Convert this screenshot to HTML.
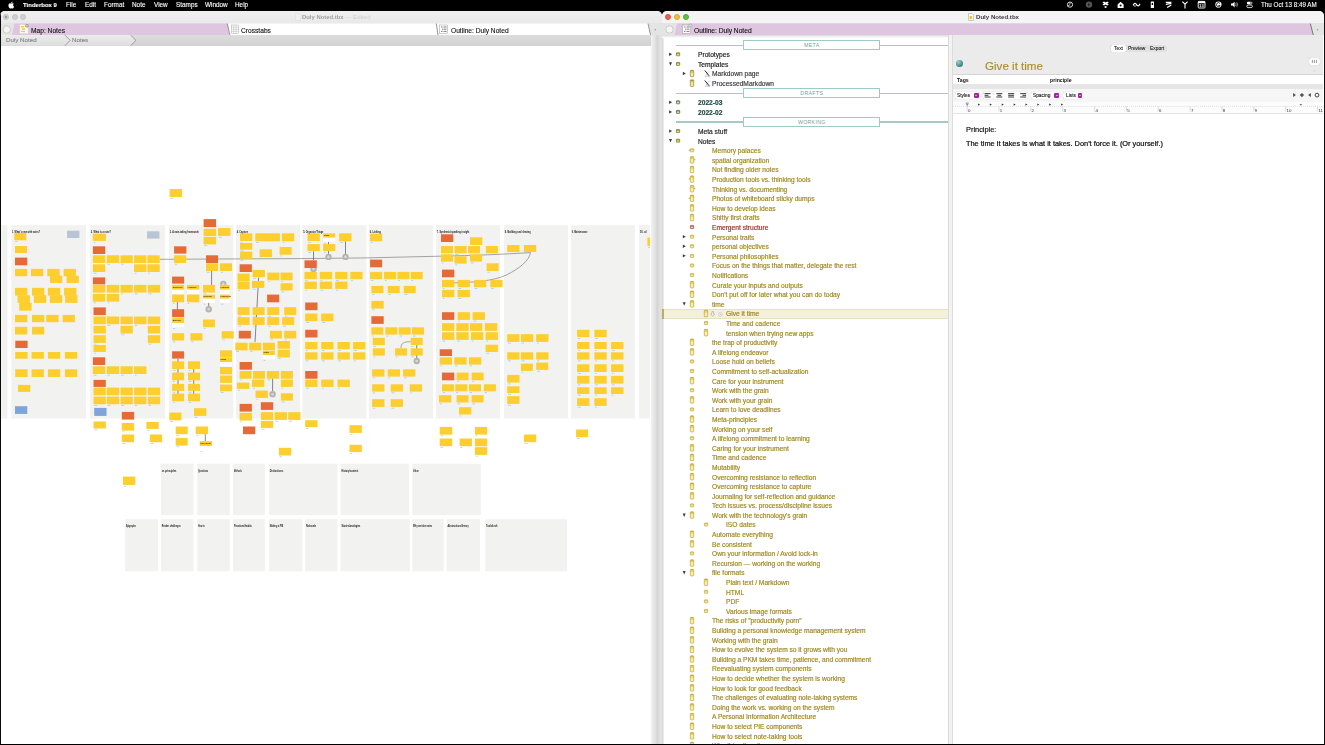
<!DOCTYPE html><html><head><meta charset="utf-8"><title>Tinderbox</title><style>

html,body{margin:0;padding:0;background:#000;}
body{width:1325px;height:745px;position:relative;overflow:hidden;font-family:"Liberation Sans",sans-serif;color:#222;}
.abs{position:absolute;}
.t{position:absolute;white-space:nowrap;line-height:1;will-change:transform;}
#menubar{left:0;top:0;width:1325px;height:10.5px;background:#000;color:#fff;}
#menubar .t{font-size:6.4px;color:#fff;top:1.6px;-webkit-text-stroke:.1px #fff;}
#lw{left:0;top:10.5px;width:662px;height:733px;background:#fff;border-radius:5px 5px 0 0;overflow:hidden;}
#rw{left:662px;top:10.5px;width:661.5px;height:733px;background:#fff;border-radius:5px 5px 0 0;overflow:hidden;}
.tl{position:absolute;width:5.8px;height:5.8px;border-radius:50%;top:3.9px;}
.orow{position:absolute;left:0;width:286px;height:9.6px;}
.orow .t{font-size:6.65px;top:2.3px;-webkit-text-stroke:.18px currentColor;}
.sep{position:absolute;height:1.2px;background:#a3cbc4;}
.sepbox{position:absolute;border:1px solid #a0c9c2;background:#fff;box-sizing:border-box;text-align:center;font-size:5.2px;color:#6fa39b;line-height:9.2px;letter-spacing:.35px;}
.tri{position:absolute;width:0;height:0;}
.tri.r{border-left:3.2px solid #444;border-top:1.8px solid transparent;border-bottom:1.8px solid transparent;}
.tri.d{border-top:3.7px solid #444;border-left:1.6px solid transparent;border-right:1.6px solid transparent;}
.btn{position:absolute;box-sizing:border-box;background:#fff;box-shadow:0 0 .7px rgba(0,0,0,.35);border-radius:2px;}
.pp{position:absolute;width:4.8px;height:4.8px;background:#a3279f;border-radius:1px;}

</style></head><body>
<div id="menubar" class="abs">
<svg class="abs" style="left:8px;top:1.2px" width="7" height="8" viewBox="0 0 14 16"><path fill="#fff" d="M10.2 8.5c0-1.7 1.4-2.5 1.5-2.6-.8-1.2-2.1-1.3-2.5-1.4-1.1-.1-2.1.6-2.6.6-.5 0-1.4-.6-2.3-.6C3.1 4.6 2 5.3 1.4 6.3c-1.2 2.1-.3 5.3.9 7 .6.8 1.3 1.8 2.2 1.7.9 0 1.2-.6 2.3-.6s1.4.6 2.3.6c1 0 1.6-.9 2.1-1.7.7-1 .9-1.9 1-2-.1 0-2-.8-2-2.8zM8.5 3.3c.5-.6.8-1.4.7-2.2-.7 0-1.5.5-2 1.1-.4.5-.8 1.3-.7 2.1.8.1 1.5-.4 2-1z"/></svg>
<span class="t" style="left:23.3px;font-weight:bold;font-size:6px;top:1.8px;">Tinderbox 9</span>
<span class="t" style="left:66.3px;">File</span>
<span class="t" style="left:84.8px;">Edit</span>
<span class="t" style="left:104px;">Format</span>
<span class="t" style="left:132px;">Note</span>
<span class="t" style="left:154px;">View</span>
<span class="t" style="left:175.8px;">Stamps</span>
<span class="t" style="left:205px;">Window</span>
<span class="t" style="left:235.3px;">Help</span>
<span class="t" style="left:1260.6px;font-size:6.27px;top:1.8px">Thu Oct 13 8:49 AM</span>
<svg class="abs" style="will-change:transform;left:1060px;top:0" width="200" height="10.5" viewBox="1060 0 200 10.5">
<circle cx="1070" cy="4.6" r="2.6" fill="none" stroke="#ddd" stroke-width="1"/><path d="M1067.5 6.5l2.5-2 0-2" stroke="#ddd" stroke-width=".8" fill="none"/>
<circle cx="1089" cy="4.6" r="3.2" fill="#555"/><path d="M1088 3l2.2 1.6-2.2 1.6z" fill="#222"/>
<path d="M1102.3999999999999 2.6l1.6-1 1.6 1 1.6-1 1.6 1-1.6 1 1.6 1-1.6 1-1.6-1-1.6 1-1.6-1 1.6-1z M1104.0 7l1.6-1 1.6 1-1.6 1z" fill="#fff"/>
<path d="M1117.6 4.6l3-2.8 3 2.8v3.4h-6z" fill="#fff"/><circle cx="1120.6" cy="5.4" r="1" fill="#000"/>
<path d="M1133.1999999999998 5.4c1-2.6 2.4-2.6 3.4-.8s2.4 1.8 3.4-.8" stroke="#fff" stroke-width="1.1" fill="none"/><path d="M1133.1999999999998 4.2c1 2.6 2.4 2.6 3.4.8" stroke="#fff" stroke-width=".8" fill="none"/>
<rect x="1150.8000000000002" y="1.6" width="3.2" height="6.4" rx=".6" fill="#fff"/><rect x="1151.7" y="3" width="1.4" height="2" fill="#000"/>
<path d="M1165.8 2.4h5.6M1165.8 4.4l5.6-1M1167.1 7.4l4.3-2.5" stroke="#fff" stroke-width="1.1" fill="none"/>
<path d="M1185 8.4v-4.4M1182.4 1.6l2.6 2.6 2.6-2.6" stroke="#fff" stroke-width="1.1" fill="none"/>
<rect x="1198.1999999999998" y="1.4" width="6.8" height="6.6" rx=".8" fill="none" stroke="#fff" stroke-width=".9"/><rect x="1198.1999999999998" y="1.4" width="6.8" height="1.8" fill="#fff"/>
<text x="1201.6" y="7.3" font-size="4" font-weight="bold" fill="#fff" text-anchor="middle" font-family='"Liberation Sans", sans-serif'>13</text>
<circle cx="1218.4" cy="4.6" r="3.1" fill="#fff"/><path d="M1220.0 3.4a2 2 0 1 0 .2 2.2h-1.8" stroke="#000" stroke-width=".8" fill="none"/>
<path d="M1231.0 3.6h1.6l2-1.8v5.6l-2-1.8h-1.6z" fill="#fff"/><path d="M1235.6000000000001 3.2q1 1.4 0 2.8M1236.8000000000002 2.4q1.6 2.2 0 4.4" stroke="#ccc" stroke-width=".7" fill="none"/>
<rect x="1246.8" y="1.8" width="5.6" height="2.4" rx="1.2" fill="#fff"/><rect x="1246.8" y="5" width="5.6" height="2.6" rx="1.3" fill="none" stroke="#fff" stroke-width=".8"/><circle cx="1251.0" cy="3" r=".8" fill="#000"/>
</svg>
</div>
<div id="lw" class="abs">
<div class="abs" style="left:0;top:0;width:662px;height:12.7px;background:linear-gradient(#efefef,#e9e9e9)"></div>
<div class="tl" style="left:3.3000000000000003px;background:#d0d0d0;border:0.4px solid #c2c2c2;box-sizing:border-box"></div>
<div class="tl" style="left:11.9px;background:#d0d0d0;border:0.4px solid #c2c2c2;box-sizing:border-box"></div>
<div class="tl" style="left:20.400000000000002px;background:#d0d0d0;border:0.4px solid #c2c2c2;box-sizing:border-box"></div>
<div class="abs" style="left:5.2px;top:5.8px;width:2px;height:2px;border-radius:50%;background:#888"></div>
<svg class="abs" style="left:295px;top:2.6px" width="6" height="8" viewBox="0 0 6 8"><path d="M.5.5h3.5l1.5 1.5v5.5h-5z" fill="#f1f1f1" stroke="#dcdcdc" stroke-width=".5"/></svg>
<span class="t" style="left:301.9px;top:3.9px;font-size:5.9px;font-weight:bold;color:#a0a0a0">Duly Noted.tbx <span style="color:#cfcfcf;font-weight:normal;font-size:6.2px">— Edited</span></span>
<div class="abs" style="left:0;top:12.7px;width:662px;height:12px;background:#e4e4e4"></div>
<svg class="abs" style="left:0;top:12.7px" width="662" height="12" viewBox="0 0 662 12">
<path d="M12 12L14.5 0.6H227.5L230 12z" fill="#dfc6e0"/>
<path d="M229.3 12L227.6 0.6H436.5L438 12z" fill="#fff"/>
<path d="M438 12L436.5 0.6H648L650.5 12z" fill="#fff"/>
<path d="M227.3 0.6L229.8 12M436.3 0.6L438 12M648 .6L650.5 12" stroke="#8a8a8a" stroke-width=".9" fill="none"/>
<circle cx="6.8" cy="6.5" r="3.7" fill="#f4f4f4" stroke="#b5b5b5" stroke-width=".6"/>
<rect x="19.8" y="1.6" width="8.2" height="9" fill="#fff" stroke="#ccc" stroke-width=".4"/><rect x="20.8" y="3" width="3.6" height="1.5" fill="#f6c92e"/><rect x="21.6" y="5.4" width="3.6" height="1.4" fill="#f6c92e"/><rect x="20.8" y="7.8" width="4.2" height="1.4" fill="#f6c92e"/><circle cx="26.9" cy="2.8" r="1.5" fill="#c8c8c8" stroke="#777" stroke-width=".5"/>
<rect x="231.5" y="2" width="7" height="8.5" fill="#fff" stroke="#aaa" stroke-width=".5"/><path d="M233.8 2v8.5M236.1 2v8.5M231.5 4.2h7M231.5 6.3h7M231.5 8.4h7" stroke="#aaa" stroke-width=".4"/>
<rect x="439.6" y="2" width="8" height="8.5" fill="#fff" stroke="#999" stroke-width=".5"/><path d="M441 4h1.5M443.5 4h3M442 6.2h1.5M444 6.2h2.5M441 8.4h1.5M443.5 8.4h3" stroke="#444" stroke-width=".7"/>
<circle cx="655.4" cy="6.8" r=".8" fill="#999"/>
</svg>
<span class="t" style="left:31px;top:17px;font-size:6.65px;color:#111;-webkit-text-stroke:.12px #111">Map: Notes</span>
<span class="t" style="left:241px;top:17px;font-size:6.65px;color:#111;-webkit-text-stroke:.12px #111">Crosstabs</span>
<span class="t" style="left:451px;top:17px;font-size:6.65px;color:#111;-webkit-text-stroke:.12px #111">Outline: Duly Noted</span>
<div class="abs" style="left:0;top:24.7px;width:650.5px;height:10.8px;background:linear-gradient(#dcdcdc,#d2d2d2)"></div>
<svg class="abs" style="left:0;top:24.7px" width="140" height="10.8" viewBox="0 0 140 10.8"><defs><linearGradient id="bg" x1="0" y1="0" x2="0" y2="1"><stop offset="0" stop-color="#ececec"/><stop offset="1" stop-color="#dedede"/></linearGradient></defs><path d="M0 0H130.5L136 5.4L130.5 10.8H0z" fill="url(#bg)"/><path d="M64.8 0L70.2 5.4L64.8 10.8M130.5 0L136 5.4L130.5 10.8" stroke="#8c8c8c" stroke-width=".8" fill="none"/></svg>
<span class="t" style="left:6px;top:26.7px;font-size:6.2px;color:#888;-webkit-text-stroke:.15px #888">Duly Noted</span>
<span class="t" style="left:72px;top:26.7px;font-size:6.2px;color:#888;-webkit-text-stroke:.15px #888">Notes</span>
<div class="abs" style="left:650.5px;top:24.7px;width:11.5px;height:709px;background:linear-gradient(90deg,#f2f2f2 0,#e6e6e6 3px,#dedede 5px,#d2d2d2 6.2px,#dcdcdc 7.5px,#e4e4e4 10px,#dadada 11.5px)"></div>
<div class="abs" style="left:0;top:0;width:1.1px;height:735px;background:#0a0a0a"></div>
<svg class="abs" style="will-change:transform;left:0;top:35.5px" width="650.5" height="698" viewBox="0 46 650.5 698">
<rect x="1.1" y="225.2" width="6.4" height="193.3" fill="#f2f2f1"/>
<rect x="11.3" y="225.2" width="74.7" height="193.3" fill="#f2f2f1"/>
<rect x="90.0" y="225.2" width="75.0" height="193.3" fill="#f2f2f1"/>
<rect x="169.0" y="225.2" width="64.3" height="193.3" fill="#f2f2f1"/>
<rect x="236.0" y="225.2" width="64.0" height="193.3" fill="#f2f2f1"/>
<rect x="302.4" y="225.2" width="64.0" height="193.3" fill="#f2f2f1"/>
<rect x="369.0" y="225.2" width="64.0" height="193.3" fill="#f2f2f1"/>
<rect x="436.0" y="225.2" width="64.0" height="193.3" fill="#f2f2f1"/>
<rect x="504.0" y="225.2" width="64.0" height="193.3" fill="#f2f2f1"/>
<rect x="571.0" y="225.2" width="64.0" height="193.3" fill="#f2f2f1"/>
<rect x="639.0" y="225.2" width="11.0" height="193.3" fill="#f2f2f1"/>
<rect x="161.0" y="463.7" width="32.5" height="51.4" fill="#f2f2f1"/>
<rect x="197.2" y="463.7" width="32.6" height="51.4" fill="#f2f2f1"/>
<rect x="233.1" y="463.7" width="31.8" height="51.4" fill="#f2f2f1"/>
<rect x="269.0" y="463.7" width="68.4" height="51.4" fill="#f2f2f1"/>
<rect x="340.6" y="463.7" width="68.5" height="51.4" fill="#f2f2f1"/>
<rect x="412.3" y="463.7" width="68.5" height="51.4" fill="#f2f2f1"/>
<rect x="125.1" y="519.2" width="33.0" height="52.1" fill="#f2f2f1"/>
<rect x="161.0" y="519.2" width="32.5" height="52.1" fill="#f2f2f1"/>
<rect x="197.2" y="519.2" width="32.6" height="52.1" fill="#f2f2f1"/>
<rect x="233.1" y="519.2" width="31.8" height="52.1" fill="#f2f2f1"/>
<rect x="269.0" y="519.2" width="33.4" height="52.1" fill="#f2f2f1"/>
<rect x="305.2" y="519.2" width="32.2" height="52.1" fill="#f2f2f1"/>
<rect x="340.6" y="519.2" width="69.3" height="52.1" fill="#f2f2f1"/>
<rect x="412.3" y="519.2" width="31.4" height="52.1" fill="#f2f2f1"/>
<rect x="446.6" y="519.2" width="33.4" height="52.1" fill="#f2f2f1"/>
<rect x="485.3" y="519.2" width="81.9" height="52.1" fill="#f2f2f1"/>
<path d="M159.7 259.3L300 258.6L366 257.9L440 256.2Q490 255.2 530.5 252.6" stroke="#8e8e8e" stroke-width=".8" fill="none"/>
<path d="M530.5 252.6C529.5 260 520 268.3 506.6 274.9S470 282.4 454 282.9" stroke="#8e8e8e" stroke-width=".8" fill="none"/>
<path d="M211.6 270.9V285M177.4 302V310M258.6 277.6L255 342M313.5 251.3V260M328.5 241.3V254M345.5 241.3V254M178 359V394M193.7 365V394M205.3 434.2V441.2M208.7 297.5V306M272.6 378.6V391M416.7 345V358" stroke="#555" stroke-width=".7" fill="none"/>
<path d="M401 348C401 343 404 341.7 410.7 341.7" stroke="#8e8e8e" stroke-width=".8" fill="none"/>
<circle cx="208.7" cy="309.2" r="3.2" fill="#b3b3b3"/><circle cx="208.7" cy="309.2" r="1.3" fill="#d8d8d8"/>
<circle cx="223.3" cy="283.9" r="3.2" fill="#b3b3b3"/><circle cx="223.3" cy="283.9" r="1.3" fill="#d8d8d8"/>
<circle cx="313.5" cy="269.1" r="3.2" fill="#b3b3b3"/><circle cx="313.5" cy="269.1" r="1.3" fill="#d8d8d8"/>
<circle cx="328.5" cy="256.9" r="3.2" fill="#b3b3b3"/><circle cx="328.5" cy="256.9" r="1.3" fill="#d8d8d8"/>
<circle cx="345.5" cy="256.9" r="3.2" fill="#b3b3b3"/><circle cx="345.5" cy="256.9" r="1.3" fill="#d8d8d8"/>
<circle cx="272.6" cy="394.2" r="3.2" fill="#b3b3b3"/><circle cx="272.6" cy="394.2" r="1.3" fill="#d8d8d8"/>
<circle cx="416.7" cy="361" r="3.2" fill="#b3b3b3"/><circle cx="416.7" cy="361" r="1.3" fill="#d8d8d8"/>
<rect x="14.3" y="233.0" width="12.0" height="7.3" fill="#fcce2e"/>
<rect x="15.0" y="246.0" width="12.0" height="7.0" fill="#fcce2e"/>
<rect x="15.0" y="257.6" width="12.3" height="7.7" fill="#e66a38"/>
<rect x="15.0" y="268.9" width="12.3" height="7.3" fill="#fcce2e"/>
<rect x="31.0" y="268.9" width="12.3" height="7.3" fill="#fcce2e"/>
<rect x="47.3" y="268.9" width="12.3" height="7.3" fill="#fcce2e"/>
<rect x="63.6" y="268.9" width="12.3" height="7.3" fill="#fcce2e"/>
<rect x="49.9" y="275.7" width="12.3" height="7.3" fill="#fcce2e"/>
<rect x="66.6" y="275.7" width="12.3" height="7.3" fill="#fcce2e"/>
<rect x="15.0" y="287.9" width="12.3" height="7.7" fill="#fcce2e"/>
<rect x="32.0" y="287.9" width="12.3" height="7.7" fill="#fcce2e"/>
<rect x="47.9" y="287.9" width="12.3" height="7.7" fill="#fcce2e"/>
<rect x="64.1" y="287.9" width="12.3" height="7.7" fill="#fcce2e"/>
<rect x="17.6" y="295.2" width="12.3" height="7.7" fill="#fcce2e"/>
<rect x="33.9" y="295.2" width="12.3" height="7.7" fill="#fcce2e"/>
<rect x="49.9" y="295.2" width="12.3" height="7.7" fill="#fcce2e"/>
<rect x="65.2" y="295.2" width="12.3" height="7.7" fill="#fcce2e"/>
<rect x="19.3" y="302.9" width="12.3" height="7.7" fill="#fcce2e"/>
<rect x="15.0" y="314.9" width="12.3" height="7.3" fill="#fcce2e"/>
<rect x="32.0" y="314.9" width="12.3" height="7.3" fill="#fcce2e"/>
<rect x="46.3" y="314.9" width="12.3" height="7.3" fill="#fcce2e"/>
<rect x="62.6" y="314.9" width="12.3" height="7.3" fill="#fcce2e"/>
<rect x="15.0" y="326.8" width="12.3" height="7.7" fill="#fcce2e"/>
<rect x="32.0" y="326.8" width="12.3" height="7.7" fill="#fcce2e"/>
<rect x="67.1" y="230.7" width="12.3" height="7.3" fill="#b9c5d5"/>
<rect x="92.9" y="233.6" width="13.0" height="7.3" fill="#fcce2e"/>
<rect x="92.9" y="246.3" width="12.3" height="7.7" fill="#e66a38"/>
<rect x="92.9" y="255.3" width="12.3" height="7.7" fill="#fcce2e"/>
<rect x="106.8" y="255.3" width="12.3" height="7.7" fill="#fcce2e"/>
<rect x="120.5" y="255.3" width="12.3" height="7.7" fill="#fcce2e"/>
<rect x="134.1" y="255.3" width="12.3" height="7.7" fill="#fcce2e"/>
<rect x="147.4" y="255.3" width="12.3" height="7.7" fill="#fcce2e"/>
<rect x="92.9" y="264.3" width="12.3" height="7.7" fill="#fcce2e"/>
<rect x="134.1" y="264.3" width="12.3" height="7.7" fill="#fcce2e"/>
<rect x="147.4" y="264.3" width="12.3" height="7.7" fill="#fcce2e"/>
<rect x="92.9" y="277.4" width="12.3" height="7.0" fill="#e66a38"/>
<rect x="92.9" y="284.9" width="12.3" height="7.7" fill="#fcce2e"/>
<rect x="106.8" y="284.9" width="12.3" height="7.7" fill="#fcce2e"/>
<rect x="120.5" y="284.9" width="12.3" height="7.7" fill="#fcce2e"/>
<rect x="134.1" y="284.9" width="12.3" height="7.7" fill="#fcce2e"/>
<rect x="147.8" y="284.9" width="12.3" height="7.7" fill="#fcce2e"/>
<rect x="92.9" y="293.9" width="12.3" height="7.7" fill="#fcce2e"/>
<rect x="106.8" y="293.9" width="12.3" height="7.7" fill="#fcce2e"/>
<rect x="93.5" y="307.4" width="12.3" height="7.7" fill="#e66a38"/>
<rect x="93.5" y="316.5" width="12.3" height="7.7" fill="#fcce2e"/>
<rect x="106.8" y="316.5" width="12.3" height="7.7" fill="#fcce2e"/>
<rect x="120.5" y="316.5" width="12.3" height="7.7" fill="#fcce2e"/>
<rect x="134.1" y="316.5" width="12.3" height="7.7" fill="#fcce2e"/>
<rect x="147.8" y="316.5" width="12.3" height="7.7" fill="#fcce2e"/>
<rect x="93.5" y="325.8" width="12.3" height="7.7" fill="#fcce2e"/>
<rect x="120.5" y="325.8" width="12.3" height="7.7" fill="#fcce2e"/>
<rect x="147.8" y="325.8" width="12.3" height="7.7" fill="#fcce2e"/>
<rect x="93.5" y="335.2" width="12.3" height="7.7" fill="#fcce2e"/>
<rect x="147.8" y="335.2" width="12.3" height="7.7" fill="#fcce2e"/>
<rect x="147.1" y="231.3" width="12.3" height="7.3" fill="#b9c5d5"/>
<rect x="174.1" y="246.3" width="12.3" height="7.3" fill="#e66a38"/>
<rect x="174.1" y="255.3" width="12.0" height="7.7" fill="#fcce2e"/>
<rect x="206.0" y="255.3" width="12.0" height="7.7" fill="#e66a38"/>
<rect x="206.0" y="263.3" width="12.0" height="7.7" fill="#fcce2e"/>
<rect x="172.1" y="276.6" width="12.0" height="7.0" fill="#e66a38"/>
<rect x="172.1" y="284.9" width="12.0" height="9.0" fill="#fff"/>
<rect x="172.1" y="284.9" width="12.0" height="4.7" fill="#fcce2e"/>
<rect x="187.0" y="284.9" width="12.3" height="9.0" fill="#fff"/>
<rect x="187.0" y="284.9" width="12.3" height="4.7" fill="#fcce2e"/>
<rect x="203.0" y="284.9" width="12.0" height="7.7" fill="#fcce2e"/>
<rect x="172.1" y="294.6" width="12.0" height="7.7" fill="#fcce2e"/>
<rect x="187.0" y="294.6" width="12.3" height="7.7" fill="#fcce2e"/>
<rect x="203.0" y="294.6" width="12.0" height="8.3" fill="#fff"/>
<rect x="203.0" y="294.6" width="12.0" height="4.0" fill="#fcce2e"/>
<rect x="172.1" y="309.2" width="12.0" height="8.0" fill="#e66a38"/>
<rect x="172.1" y="317.9" width="12.0" height="9.3" fill="#fff"/>
<rect x="172.1" y="317.9" width="12.0" height="5.0" fill="#fcce2e"/>
<rect x="203.0" y="319.5" width="12.0" height="7.7" fill="#fcce2e"/>
<rect x="172.1" y="333.2" width="12.0" height="7.3" fill="#fcce2e"/>
<rect x="190.4" y="333.2" width="12.0" height="7.3" fill="#fcce2e"/>
<rect x="169.6" y="189.0" width="12.5" height="8.0" fill="#fcce2e"/>
<rect x="203.6" y="219.1" width="12.5" height="8.0" fill="#e66a38"/>
<rect x="203.6" y="228.8" width="12.5" height="7.2" fill="#fcce2e"/>
<rect x="218.1" y="228.1" width="12.3" height="7.8" fill="#fcce2e"/>
<rect x="203.6" y="236.9" width="12.5" height="7.5" fill="#fcce2e"/>
<rect x="220.0" y="263.3" width="12.0" height="7.7" fill="#fcce2e"/>
<rect x="220.0" y="284.9" width="9.7" height="9.0" fill="#fff"/>
<rect x="220.0" y="284.9" width="9.7" height="4.7" fill="#fcce2e"/>
<rect x="220.0" y="294.6" width="9.7" height="8.3" fill="#fff"/>
<rect x="220.0" y="294.6" width="9.7" height="4.0" fill="#fcce2e"/>
<rect x="221.7" y="331.2" width="12.0" height="7.3" fill="#fcce2e"/>
<rect x="240.0" y="233.3" width="12.3" height="7.7" fill="#fcce2e"/>
<rect x="255.3" y="233.3" width="24.6" height="8.0" fill="#fcce2e"/>
<rect x="281.9" y="233.3" width="12.3" height="8.0" fill="#fcce2e"/>
<rect x="240.0" y="243.0" width="12.3" height="6.7" fill="#fcce2e"/>
<rect x="279.6" y="247.0" width="12.0" height="7.7" fill="#fcce2e"/>
<rect x="240.0" y="251.6" width="12.3" height="7.3" fill="#fcce2e"/>
<rect x="259.6" y="249.3" width="12.3" height="7.7" fill="#fcce2e"/>
<rect x="239.6" y="264.3" width="12.3" height="7.7" fill="#e66a38"/>
<rect x="252.6" y="269.9" width="12.3" height="7.3" fill="#fcce2e"/>
<rect x="267.3" y="272.6" width="12.0" height="7.7" fill="#fcce2e"/>
<rect x="280.6" y="272.6" width="12.0" height="7.7" fill="#fcce2e"/>
<rect x="237.6" y="273.6" width="12.0" height="7.7" fill="#fcce2e"/>
<rect x="237.6" y="281.6" width="12.0" height="7.7" fill="#fcce2e"/>
<rect x="252.0" y="280.9" width="12.3" height="7.0" fill="#fcce2e"/>
<rect x="280.6" y="283.2" width="12.0" height="7.3" fill="#fcce2e"/>
<rect x="267.1" y="294.6" width="12.1" height="7.7" fill="#e66a38"/>
<rect x="237.6" y="307.2" width="12.0" height="7.7" fill="#fcce2e"/>
<rect x="252.6" y="307.2" width="12.0" height="7.7" fill="#fcce2e"/>
<rect x="267.3" y="307.2" width="12.0" height="7.7" fill="#fcce2e"/>
<rect x="284.2" y="307.2" width="12.0" height="7.7" fill="#fcce2e"/>
<rect x="237.6" y="317.2" width="12.0" height="7.7" fill="#fcce2e"/>
<rect x="252.6" y="317.2" width="12.0" height="7.7" fill="#fcce2e"/>
<rect x="267.3" y="317.2" width="12.0" height="7.7" fill="#fcce2e"/>
<rect x="282.2" y="317.2" width="12.0" height="7.7" fill="#fcce2e"/>
<rect x="238.8" y="330.8" width="12.1" height="7.7" fill="#e66a38"/>
<rect x="269.9" y="330.8" width="12.0" height="7.7" fill="#fcce2e"/>
<rect x="284.2" y="330.8" width="12.0" height="7.7" fill="#fcce2e"/>
<rect x="307.5" y="233.3" width="12.3" height="7.7" fill="#fcce2e"/>
<rect x="323.2" y="233.3" width="12.0" height="8.6" fill="#fff"/>
<rect x="323.2" y="233.3" width="12.0" height="4.3" fill="#fcce2e"/>
<rect x="339.2" y="233.3" width="12.3" height="8.0" fill="#fcce2e"/>
<rect x="307.5" y="244.1" width="12.3" height="7.0" fill="#fcce2e"/>
<rect x="323.2" y="244.1" width="12.0" height="7.0" fill="#fcce2e"/>
<rect x="304.5" y="260.3" width="12.3" height="7.7" fill="#e66a38"/>
<rect x="304.5" y="271.9" width="12.3" height="7.3" fill="#fcce2e"/>
<rect x="319.8" y="271.9" width="12.3" height="7.3" fill="#fcce2e"/>
<rect x="335.2" y="271.9" width="12.3" height="7.3" fill="#fcce2e"/>
<rect x="350.3" y="271.9" width="12.3" height="7.3" fill="#fcce2e"/>
<rect x="304.5" y="281.6" width="12.3" height="7.3" fill="#fcce2e"/>
<rect x="319.8" y="281.6" width="12.3" height="7.3" fill="#fcce2e"/>
<rect x="335.2" y="281.6" width="12.3" height="7.3" fill="#fcce2e"/>
<rect x="305.2" y="302.5" width="12.3" height="7.7" fill="#e66a38"/>
<rect x="305.2" y="313.5" width="12.3" height="7.7" fill="#fcce2e"/>
<rect x="321.2" y="313.5" width="12.3" height="7.7" fill="#fcce2e"/>
<rect x="305.2" y="329.8" width="12.3" height="7.7" fill="#e66a38"/>
<rect x="370.1" y="233.6" width="12.0" height="7.7" fill="#fcce2e"/>
<rect x="370.1" y="259.6" width="12.0" height="7.7" fill="#e66a38"/>
<rect x="370.1" y="271.9" width="12.0" height="7.3" fill="#fcce2e"/>
<rect x="384.1" y="271.9" width="12.0" height="7.3" fill="#fcce2e"/>
<rect x="397.4" y="271.9" width="12.0" height="7.3" fill="#fcce2e"/>
<rect x="410.7" y="271.9" width="12.0" height="7.3" fill="#fcce2e"/>
<rect x="371.4" y="285.9" width="12.0" height="7.3" fill="#fcce2e"/>
<rect x="387.7" y="285.9" width="12.0" height="7.3" fill="#fcce2e"/>
<rect x="403.7" y="285.9" width="12.0" height="7.3" fill="#fcce2e"/>
<rect x="371.4" y="300.9" width="12.3" height="7.7" fill="#fcce2e"/>
<rect x="371.4" y="316.2" width="12.3" height="7.7" fill="#e66a38"/>
<rect x="371.4" y="327.3" width="12.0" height="7.3" fill="#fcce2e"/>
<rect x="385.4" y="327.3" width="12.0" height="7.3" fill="#fcce2e"/>
<rect x="398.7" y="327.3" width="12.0" height="7.3" fill="#fcce2e"/>
<rect x="412.0" y="327.3" width="12.0" height="7.3" fill="#fcce2e"/>
<rect x="372.8" y="337.8" width="12.0" height="7.3" fill="#fcce2e"/>
<rect x="410.7" y="337.8" width="12.0" height="7.3" fill="#fcce2e"/>
<rect x="441.0" y="234.3" width="12.3" height="7.7" fill="#e66a38"/>
<rect x="470.0" y="237.3" width="12.3" height="7.7" fill="#fcce2e"/>
<rect x="441.0" y="246.0" width="12.0" height="7.3" fill="#fcce2e"/>
<rect x="454.6" y="246.0" width="12.0" height="7.3" fill="#fcce2e"/>
<rect x="468.0" y="246.0" width="12.0" height="7.3" fill="#fcce2e"/>
<rect x="485.9" y="246.0" width="12.0" height="7.3" fill="#fcce2e"/>
<rect x="441.0" y="254.3" width="12.0" height="7.3" fill="#fcce2e"/>
<rect x="454.6" y="256.3" width="12.0" height="7.3" fill="#fcce2e"/>
<rect x="470.0" y="254.3" width="12.0" height="7.3" fill="#fcce2e"/>
<rect x="486.6" y="263.3" width="12.0" height="7.7" fill="#fcce2e"/>
<rect x="442.0" y="269.6" width="12.3" height="7.7" fill="#e66a38"/>
<rect x="442.0" y="279.9" width="12.3" height="7.3" fill="#fcce2e"/>
<rect x="457.6" y="279.9" width="12.3" height="7.3" fill="#fcce2e"/>
<rect x="473.9" y="279.9" width="12.3" height="7.3" fill="#fcce2e"/>
<rect x="490.3" y="279.9" width="12.3" height="7.3" fill="#fcce2e"/>
<rect x="442.0" y="289.9" width="12.3" height="7.3" fill="#fcce2e"/>
<rect x="457.6" y="289.9" width="12.3" height="7.3" fill="#fcce2e"/>
<rect x="442.0" y="312.2" width="12.3" height="7.7" fill="#e66a38"/>
<rect x="457.6" y="312.2" width="12.3" height="7.7" fill="#fcce2e"/>
<rect x="472.6" y="312.2" width="12.3" height="7.7" fill="#fcce2e"/>
<rect x="442.0" y="323.2" width="12.3" height="7.7" fill="#fcce2e"/>
<rect x="456.3" y="323.2" width="12.3" height="7.7" fill="#fcce2e"/>
<rect x="470.0" y="323.2" width="12.3" height="7.7" fill="#fcce2e"/>
<rect x="484.9" y="323.2" width="12.3" height="7.7" fill="#fcce2e"/>
<rect x="442.0" y="332.2" width="12.3" height="7.7" fill="#fcce2e"/>
<rect x="456.3" y="332.2" width="12.3" height="7.7" fill="#fcce2e"/>
<rect x="471.0" y="332.2" width="12.3" height="7.7" fill="#fcce2e"/>
<rect x="485.6" y="332.2" width="12.3" height="7.7" fill="#fcce2e"/>
<rect x="507.2" y="245.0" width="12.3" height="7.0" fill="#fcce2e"/>
<rect x="523.9" y="245.0" width="12.3" height="7.0" fill="#fcce2e"/>
<rect x="507.2" y="334.2" width="12.3" height="7.7" fill="#fcce2e"/>
<rect x="520.9" y="334.2" width="12.3" height="7.7" fill="#fcce2e"/>
<rect x="536.2" y="334.2" width="12.3" height="7.7" fill="#fcce2e"/>
<rect x="577.1" y="329.8" width="12.3" height="7.3" fill="#fcce2e"/>
<rect x="594.4" y="329.8" width="12.3" height="7.3" fill="#fcce2e"/>
<rect x="647.4" y="237.6" width="2.7" height="8.3" fill="#fcce2e"/>
<rect x="15.3" y="340.7" width="12.3" height="7.3" fill="#e66a38"/>
<rect x="15.3" y="352.0" width="12.3" height="6.7" fill="#fcce2e"/>
<rect x="31.6" y="352.0" width="12.3" height="6.7" fill="#fcce2e"/>
<rect x="47.9" y="352.0" width="12.3" height="6.7" fill="#fcce2e"/>
<rect x="64.9" y="352.0" width="12.3" height="6.7" fill="#fcce2e"/>
<rect x="15.3" y="369.3" width="12.3" height="7.7" fill="#fcce2e"/>
<rect x="31.6" y="369.3" width="12.3" height="7.7" fill="#fcce2e"/>
<rect x="47.9" y="369.3" width="12.3" height="7.7" fill="#fcce2e"/>
<rect x="64.9" y="369.3" width="12.3" height="7.7" fill="#fcce2e"/>
<rect x="18.0" y="384.9" width="12.3" height="7.0" fill="#fcce2e"/>
<rect x="15.0" y="406.2" width="12.3" height="7.7" fill="#7ea4d9"/>
<rect x="93.5" y="345.0" width="12.3" height="7.0" fill="#fcce2e"/>
<rect x="92.9" y="357.3" width="12.3" height="7.7" fill="#e66a38"/>
<rect x="92.9" y="366.3" width="12.3" height="7.7" fill="#fcce2e"/>
<rect x="106.8" y="366.3" width="12.3" height="7.7" fill="#fcce2e"/>
<rect x="120.5" y="366.3" width="12.3" height="7.7" fill="#fcce2e"/>
<rect x="134.1" y="366.3" width="12.3" height="7.7" fill="#fcce2e"/>
<rect x="93.5" y="379.9" width="12.3" height="7.0" fill="#e66a38"/>
<rect x="93.5" y="387.6" width="12.3" height="7.7" fill="#fcce2e"/>
<rect x="106.8" y="387.6" width="12.3" height="7.7" fill="#fcce2e"/>
<rect x="120.5" y="387.6" width="12.3" height="7.7" fill="#fcce2e"/>
<rect x="134.1" y="387.6" width="12.3" height="7.7" fill="#fcce2e"/>
<rect x="147.8" y="387.6" width="12.3" height="7.7" fill="#fcce2e"/>
<rect x="93.5" y="396.6" width="12.3" height="7.7" fill="#fcce2e"/>
<rect x="106.8" y="396.6" width="12.3" height="7.7" fill="#fcce2e"/>
<rect x="120.5" y="396.6" width="12.3" height="7.7" fill="#fcce2e"/>
<rect x="134.1" y="396.6" width="12.3" height="7.7" fill="#fcce2e"/>
<rect x="147.8" y="396.6" width="12.3" height="7.7" fill="#fcce2e"/>
<rect x="94.2" y="407.9" width="12.3" height="8.0" fill="#7ea4d9"/>
<rect x="121.8" y="411.9" width="12.3" height="7.7" fill="#e66a38"/>
<rect x="93.5" y="421.5" width="12.3" height="7.0" fill="#fcce2e"/>
<rect x="121.8" y="422.9" width="12.3" height="7.7" fill="#fcce2e"/>
<rect x="146.4" y="421.9" width="12.3" height="7.0" fill="#fcce2e"/>
<rect x="121.8" y="434.5" width="12.3" height="7.7" fill="#fcce2e"/>
<rect x="149.8" y="434.5" width="12.3" height="7.7" fill="#fcce2e"/>
<rect x="172.1" y="351.3" width="12.0" height="7.3" fill="#e66a38"/>
<rect x="172.1" y="361.3" width="12.0" height="7.7" fill="#fcce2e"/>
<rect x="188.0" y="361.3" width="12.0" height="7.7" fill="#fcce2e"/>
<rect x="172.1" y="372.6" width="12.0" height="7.7" fill="#fcce2e"/>
<rect x="188.0" y="372.6" width="12.0" height="7.7" fill="#fcce2e"/>
<rect x="172.1" y="383.9" width="12.0" height="7.0" fill="#fcce2e"/>
<rect x="188.0" y="383.9" width="12.0" height="7.0" fill="#fcce2e"/>
<rect x="172.1" y="393.6" width="12.0" height="7.7" fill="#fcce2e"/>
<rect x="188.0" y="393.6" width="12.0" height="7.7" fill="#fcce2e"/>
<rect x="194.0" y="408.2" width="12.3" height="7.7" fill="#fcce2e"/>
<rect x="169.4" y="412.6" width="12.0" height="7.7" fill="#fcce2e"/>
<rect x="175.7" y="426.5" width="12.0" height="7.7" fill="#fcce2e"/>
<rect x="195.7" y="426.5" width="12.3" height="7.7" fill="#fcce2e"/>
<rect x="175.7" y="437.9" width="12.0" height="7.7" fill="#fcce2e"/>
<rect x="199.7" y="441.2" width="12.3" height="9.0" fill="#fff"/>
<rect x="199.7" y="441.2" width="12.3" height="4.7" fill="#fcce2e"/>
<rect x="220.0" y="350.3" width="12.0" height="6.7" fill="#fcce2e"/>
<rect x="220.0" y="357.3" width="12.0" height="9.0" fill="#fff"/>
<rect x="220.0" y="357.3" width="12.0" height="4.7" fill="#fcce2e"/>
<rect x="220.0" y="367.0" width="12.0" height="7.3" fill="#fcce2e"/>
<rect x="220.0" y="375.6" width="12.0" height="7.3" fill="#fcce2e"/>
<rect x="220.0" y="384.6" width="12.0" height="6.7" fill="#fcce2e"/>
<rect x="235.3" y="342.7" width="12.3" height="7.7" fill="#fcce2e"/>
<rect x="249.3" y="342.7" width="12.0" height="7.7" fill="#fcce2e"/>
<rect x="262.9" y="342.7" width="12.0" height="7.7" fill="#fcce2e"/>
<rect x="277.6" y="341.0" width="12.3" height="7.7" fill="#fcce2e"/>
<rect x="262.9" y="350.7" width="12.0" height="8.6" fill="#fff"/>
<rect x="262.9" y="350.7" width="12.0" height="4.3" fill="#fcce2e"/>
<rect x="277.6" y="349.7" width="12.3" height="7.7" fill="#fcce2e"/>
<rect x="239.6" y="362.0" width="12.3" height="7.7" fill="#e66a38"/>
<rect x="239.6" y="371.0" width="12.0" height="7.7" fill="#fcce2e"/>
<rect x="253.0" y="371.0" width="12.0" height="7.7" fill="#fcce2e"/>
<rect x="266.9" y="371.0" width="12.0" height="7.7" fill="#fcce2e"/>
<rect x="280.9" y="371.0" width="12.0" height="7.7" fill="#fcce2e"/>
<rect x="252.0" y="379.6" width="12.3" height="7.3" fill="#fcce2e"/>
<rect x="280.9" y="379.6" width="12.0" height="7.3" fill="#fcce2e"/>
<rect x="237.0" y="382.6" width="12.3" height="6.3" fill="#fcce2e"/>
<rect x="255.6" y="390.6" width="12.3" height="7.3" fill="#fcce2e"/>
<rect x="280.9" y="393.3" width="12.0" height="7.3" fill="#fcce2e"/>
<rect x="239.6" y="403.9" width="12.3" height="7.7" fill="#e66a38"/>
<rect x="260.9" y="402.2" width="12.3" height="7.7" fill="#e66a38"/>
<rect x="239.6" y="412.9" width="12.3" height="7.7" fill="#fcce2e"/>
<rect x="260.9" y="412.2" width="12.3" height="7.7" fill="#fcce2e"/>
<rect x="274.6" y="412.2" width="12.3" height="7.7" fill="#fcce2e"/>
<rect x="288.2" y="412.2" width="12.3" height="7.7" fill="#fcce2e"/>
<rect x="260.9" y="420.9" width="12.3" height="7.0" fill="#fcce2e"/>
<rect x="243.0" y="426.5" width="12.3" height="7.7" fill="#e66a38"/>
<rect x="278.9" y="447.8" width="12.3" height="7.7" fill="#fcce2e"/>
<rect x="305.2" y="342.0" width="12.3" height="7.3" fill="#fcce2e"/>
<rect x="321.2" y="342.0" width="12.3" height="7.3" fill="#fcce2e"/>
<rect x="337.5" y="342.0" width="12.3" height="7.3" fill="#fcce2e"/>
<rect x="353.1" y="342.0" width="12.3" height="7.3" fill="#fcce2e"/>
<rect x="305.2" y="352.3" width="12.3" height="7.3" fill="#fcce2e"/>
<rect x="321.2" y="352.3" width="12.3" height="7.3" fill="#fcce2e"/>
<rect x="337.5" y="352.3" width="12.3" height="7.3" fill="#fcce2e"/>
<rect x="353.1" y="352.3" width="12.3" height="7.3" fill="#fcce2e"/>
<rect x="305.2" y="371.0" width="12.3" height="7.7" fill="#e66a38"/>
<rect x="305.2" y="379.6" width="12.3" height="7.3" fill="#fcce2e"/>
<rect x="321.2" y="379.6" width="12.3" height="7.3" fill="#fcce2e"/>
<rect x="337.5" y="379.6" width="12.3" height="7.3" fill="#fcce2e"/>
<rect x="305.2" y="420.2" width="12.3" height="7.0" fill="#fcce2e"/>
<rect x="349.5" y="425.2" width="12.3" height="7.7" fill="#fcce2e"/>
<rect x="349.5" y="444.8" width="12.3" height="7.3" fill="#fcce2e"/>
<rect x="372.8" y="348.3" width="12.0" height="7.3" fill="#fcce2e"/>
<rect x="395.1" y="348.3" width="12.0" height="7.3" fill="#fcce2e"/>
<rect x="410.7" y="348.3" width="12.0" height="7.3" fill="#fcce2e"/>
<rect x="372.1" y="369.3" width="12.3" height="7.3" fill="#fcce2e"/>
<rect x="387.7" y="369.3" width="12.3" height="7.3" fill="#fcce2e"/>
<rect x="403.1" y="369.3" width="12.3" height="7.3" fill="#fcce2e"/>
<rect x="372.1" y="384.3" width="12.3" height="7.3" fill="#fcce2e"/>
<rect x="390.7" y="384.3" width="12.3" height="7.3" fill="#fcce2e"/>
<rect x="409.7" y="384.3" width="12.3" height="7.3" fill="#fcce2e"/>
<rect x="372.1" y="399.2" width="12.3" height="7.7" fill="#fcce2e"/>
<rect x="390.7" y="399.2" width="12.3" height="7.7" fill="#fcce2e"/>
<rect x="485.6" y="344.7" width="12.3" height="7.3" fill="#fcce2e"/>
<rect x="439.7" y="349.3" width="12.3" height="6.7" fill="#e66a38"/>
<rect x="439.7" y="357.3" width="12.3" height="7.3" fill="#fcce2e"/>
<rect x="454.3" y="357.3" width="12.3" height="7.3" fill="#fcce2e"/>
<rect x="469.0" y="357.3" width="12.3" height="7.3" fill="#fcce2e"/>
<rect x="442.0" y="372.6" width="12.3" height="7.7" fill="#e66a38"/>
<rect x="456.6" y="372.6" width="12.0" height="7.7" fill="#fcce2e"/>
<rect x="471.6" y="372.6" width="12.0" height="7.7" fill="#fcce2e"/>
<rect x="442.0" y="384.3" width="12.0" height="7.0" fill="#fcce2e"/>
<rect x="455.3" y="384.3" width="12.0" height="7.0" fill="#fcce2e"/>
<rect x="469.0" y="384.3" width="12.0" height="7.0" fill="#fcce2e"/>
<rect x="483.9" y="384.3" width="12.0" height="7.0" fill="#fcce2e"/>
<rect x="439.0" y="395.2" width="12.3" height="7.3" fill="#fcce2e"/>
<rect x="456.6" y="395.2" width="12.0" height="7.3" fill="#fcce2e"/>
<rect x="471.6" y="395.2" width="12.0" height="7.3" fill="#fcce2e"/>
<rect x="459.0" y="407.2" width="12.3" height="7.3" fill="#fcce2e"/>
<rect x="439.7" y="426.9" width="12.6" height="7.7" fill="#fcce2e"/>
<rect x="474.9" y="426.9" width="12.3" height="7.7" fill="#fcce2e"/>
<rect x="439.7" y="438.5" width="12.6" height="7.7" fill="#fcce2e"/>
<rect x="459.6" y="438.5" width="12.3" height="7.7" fill="#fcce2e"/>
<rect x="474.9" y="438.5" width="12.3" height="7.8" fill="#fcce2e"/>
<rect x="474.9" y="447.2" width="12.3" height="7.7" fill="#fcce2e"/>
<rect x="507.2" y="352.3" width="12.3" height="7.3" fill="#fcce2e"/>
<rect x="520.9" y="352.3" width="12.3" height="7.3" fill="#fcce2e"/>
<rect x="536.2" y="352.3" width="12.3" height="7.3" fill="#fcce2e"/>
<rect x="520.9" y="363.6" width="12.0" height="7.3" fill="#fcce2e"/>
<rect x="536.2" y="362.6" width="12.0" height="7.3" fill="#fcce2e"/>
<rect x="507.2" y="374.9" width="12.3" height="7.7" fill="#fcce2e"/>
<rect x="507.2" y="386.3" width="12.3" height="6.7" fill="#fcce2e"/>
<rect x="507.2" y="396.2" width="12.3" height="7.7" fill="#fcce2e"/>
<rect x="523.9" y="434.5" width="12.3" height="7.7" fill="#fcce2e"/>
<rect x="577.1" y="342.0" width="12.3" height="7.0" fill="#fcce2e"/>
<rect x="594.4" y="342.0" width="12.3" height="7.0" fill="#fcce2e"/>
<rect x="611.1" y="342.0" width="12.3" height="7.0" fill="#fcce2e"/>
<rect x="577.1" y="352.3" width="12.3" height="7.3" fill="#fcce2e"/>
<rect x="594.4" y="352.3" width="12.3" height="7.3" fill="#fcce2e"/>
<rect x="611.1" y="352.3" width="12.3" height="7.3" fill="#fcce2e"/>
<rect x="577.1" y="364.3" width="12.3" height="7.7" fill="#fcce2e"/>
<rect x="594.4" y="364.3" width="12.3" height="7.7" fill="#fcce2e"/>
<rect x="611.1" y="364.3" width="12.3" height="7.7" fill="#fcce2e"/>
<rect x="577.1" y="375.9" width="12.3" height="7.7" fill="#fcce2e"/>
<rect x="594.4" y="375.9" width="12.3" height="7.7" fill="#fcce2e"/>
<rect x="611.1" y="375.9" width="12.3" height="7.7" fill="#fcce2e"/>
<rect x="577.1" y="387.3" width="12.3" height="6.7" fill="#fcce2e"/>
<rect x="594.4" y="387.3" width="12.3" height="6.7" fill="#fcce2e"/>
<rect x="611.1" y="387.3" width="12.3" height="6.7" fill="#fcce2e"/>
<rect x="577.1" y="398.2" width="12.3" height="7.7" fill="#fcce2e"/>
<rect x="594.4" y="398.2" width="12.3" height="7.7" fill="#fcce2e"/>
<rect x="576.1" y="429.5" width="12.0" height="7.7" fill="#fcce2e"/>
<rect x="123.0" y="476.6" width="12.3" height="8.3" fill="#fcce2e"/>
<rect x="15.1" y="241.2" width="2.2" height=".8" fill="#8fc5ec" opacity=".85"/><rect x="93.7" y="241.9" width="1.6" height=".8" fill="#8fc5ec" opacity=".85"/><rect x="107.6" y="263.8" width="2.2" height=".8" fill="#8fc5ec" opacity=".85"/><rect x="121.3" y="263.8" width="2.2" height=".8" fill="#8fc5ec" opacity=".85"/><rect x="93.7" y="272.8" width="2.8" height=".8" fill="#8fc5ec" opacity=".85"/><rect x="134.9" y="272.8" width="1.6" height=".8" fill="#8fc5ec" opacity=".85"/><rect x="148.2" y="272.8" width="1.6" height=".8" fill="#8fc5ec" opacity=".85"/><rect x="121.3" y="293.5" width="1.6" height=".8" fill="#8fc5ec" opacity=".85"/><rect x="134.9" y="293.5" width="2.8" height=".8" fill="#8fc5ec" opacity=".85"/><rect x="148.6" y="293.5" width="2.8" height=".8" fill="#8fc5ec" opacity=".85"/><rect x="93.7" y="302.4" width="2.2" height=".8" fill="#8fc5ec" opacity=".85"/><rect x="107.6" y="302.4" width="1.6" height=".8" fill="#8fc5ec" opacity=".85"/><rect x="107.6" y="325.1" width="2.8" height=".8" fill="#8fc5ec" opacity=".85"/><rect x="134.9" y="325.1" width="2.2" height=".8" fill="#8fc5ec" opacity=".85"/><rect x="121.3" y="334.4" width="2.8" height=".8" fill="#8fc5ec" opacity=".85"/><rect x="94.3" y="343.7" width="2.2" height=".8" fill="#8fc5ec" opacity=".85"/><rect x="148.6" y="343.7" width="2.8" height=".8" fill="#8fc5ec" opacity=".85"/><rect x="174.9" y="263.8" width="2.2" height=".8" fill="#8fc5ec" opacity=".85"/><rect x="206.8" y="271.8" width="2.8" height=".8" fill="#8fc5ec" opacity=".85"/><rect x="203.8" y="293.5" width="2.2" height=".8" fill="#8fc5ec" opacity=".85"/><rect x="172.9" y="303.1" width="1.6" height=".8" fill="#8fc5ec" opacity=".85"/><rect x="187.8" y="303.1" width="1.6" height=".8" fill="#8fc5ec" opacity=".85"/><rect x="203.8" y="303.7" width="1.6" height=".8" fill="#8fc5ec" opacity=".85"/><rect x="172.9" y="328.0" width="2.2" height=".8" fill="#8fc5ec" opacity=".85"/><rect x="203.8" y="328.1" width="1.6" height=".8" fill="#8fc5ec" opacity=".85"/><rect x="172.9" y="341.4" width="2.2" height=".8" fill="#8fc5ec" opacity=".85"/><rect x="191.2" y="341.4" width="2.2" height=".8" fill="#8fc5ec" opacity=".85"/><rect x="170.4" y="197.9" width="2.8" height=".8" fill="#8fc5ec" opacity=".85"/><rect x="218.9" y="236.8" width="2.8" height=".8" fill="#8fc5ec" opacity=".85"/><rect x="204.4" y="245.3" width="2.8" height=".8" fill="#8fc5ec" opacity=".85"/><rect x="220.8" y="271.8" width="2.2" height=".8" fill="#8fc5ec" opacity=".85"/><rect x="220.8" y="303.7" width="2.8" height=".8" fill="#8fc5ec" opacity=".85"/><rect x="222.5" y="339.4" width="2.2" height=".8" fill="#8fc5ec" opacity=".85"/><rect x="240.8" y="241.9" width="1.6" height=".8" fill="#8fc5ec" opacity=".85"/><rect x="256.1" y="242.2" width="2.8" height=".8" fill="#8fc5ec" opacity=".85"/><rect x="282.7" y="242.2" width="1.6" height=".8" fill="#8fc5ec" opacity=".85"/><rect x="240.8" y="250.5" width="2.8" height=".8" fill="#8fc5ec" opacity=".85"/><rect x="280.4" y="255.5" width="1.6" height=".8" fill="#8fc5ec" opacity=".85"/><rect x="240.8" y="259.8" width="2.2" height=".8" fill="#8fc5ec" opacity=".85"/><rect x="260.4" y="257.8" width="1.6" height=".8" fill="#8fc5ec" opacity=".85"/><rect x="253.4" y="278.1" width="2.2" height=".8" fill="#8fc5ec" opacity=".85"/><rect x="268.1" y="281.1" width="1.6" height=".8" fill="#8fc5ec" opacity=".85"/><rect x="281.4" y="281.1" width="1.6" height=".8" fill="#8fc5ec" opacity=".85"/><rect x="238.4" y="290.1" width="1.6" height=".8" fill="#8fc5ec" opacity=".85"/><rect x="252.8" y="288.8" width="2.8" height=".8" fill="#8fc5ec" opacity=".85"/><rect x="281.4" y="291.5" width="2.8" height=".8" fill="#8fc5ec" opacity=".85"/><rect x="238.4" y="315.8" width="2.8" height=".8" fill="#8fc5ec" opacity=".85"/><rect x="253.4" y="315.8" width="2.2" height=".8" fill="#8fc5ec" opacity=".85"/><rect x="268.1" y="315.8" width="2.8" height=".8" fill="#8fc5ec" opacity=".85"/><rect x="285.0" y="315.8" width="2.2" height=".8" fill="#8fc5ec" opacity=".85"/><rect x="238.4" y="325.7" width="2.8" height=".8" fill="#8fc5ec" opacity=".85"/><rect x="253.4" y="325.7" width="2.2" height=".8" fill="#8fc5ec" opacity=".85"/><rect x="268.1" y="325.7" width="2.8" height=".8" fill="#8fc5ec" opacity=".85"/><rect x="283.0" y="325.7" width="2.8" height=".8" fill="#8fc5ec" opacity=".85"/><rect x="270.7" y="339.4" width="2.2" height=".8" fill="#8fc5ec" opacity=".85"/><rect x="285.0" y="339.4" width="1.6" height=".8" fill="#8fc5ec" opacity=".85"/><rect x="308.3" y="241.9" width="2.8" height=".8" fill="#8fc5ec" opacity=".85"/><rect x="324.0" y="242.8" width="2.2" height=".8" fill="#8fc5ec" opacity=".85"/><rect x="340.0" y="242.2" width="2.8" height=".8" fill="#8fc5ec" opacity=".85"/><rect x="308.3" y="252.0" width="2.8" height=".8" fill="#8fc5ec" opacity=".85"/><rect x="324.0" y="252.0" width="1.6" height=".8" fill="#8fc5ec" opacity=".85"/><rect x="305.3" y="280.1" width="2.2" height=".8" fill="#8fc5ec" opacity=".85"/><rect x="320.6" y="280.1" width="1.6" height=".8" fill="#8fc5ec" opacity=".85"/><rect x="336.0" y="280.1" width="2.8" height=".8" fill="#8fc5ec" opacity=".85"/><rect x="351.1" y="280.1" width="1.6" height=".8" fill="#8fc5ec" opacity=".85"/><rect x="305.3" y="289.8" width="1.6" height=".8" fill="#8fc5ec" opacity=".85"/><rect x="320.6" y="289.8" width="2.8" height=".8" fill="#8fc5ec" opacity=".85"/><rect x="336.0" y="289.8" width="2.2" height=".8" fill="#8fc5ec" opacity=".85"/><rect x="306.0" y="322.1" width="2.8" height=".8" fill="#8fc5ec" opacity=".85"/><rect x="322.0" y="322.1" width="2.8" height=".8" fill="#8fc5ec" opacity=".85"/><rect x="370.9" y="242.2" width="1.6" height=".8" fill="#8fc5ec" opacity=".85"/><rect x="370.9" y="280.1" width="2.2" height=".8" fill="#8fc5ec" opacity=".85"/><rect x="384.9" y="280.1" width="1.6" height=".8" fill="#8fc5ec" opacity=".85"/><rect x="398.2" y="280.1" width="1.6" height=".8" fill="#8fc5ec" opacity=".85"/><rect x="411.5" y="280.1" width="1.6" height=".8" fill="#8fc5ec" opacity=".85"/><rect x="372.2" y="294.1" width="2.2" height=".8" fill="#8fc5ec" opacity=".85"/><rect x="388.5" y="294.1" width="2.2" height=".8" fill="#8fc5ec" opacity=".85"/><rect x="404.5" y="294.1" width="2.8" height=".8" fill="#8fc5ec" opacity=".85"/><rect x="372.2" y="309.4" width="2.2" height=".8" fill="#8fc5ec" opacity=".85"/><rect x="372.2" y="335.6" width="1.6" height=".8" fill="#8fc5ec" opacity=".85"/><rect x="386.2" y="335.6" width="2.2" height=".8" fill="#8fc5ec" opacity=".85"/><rect x="399.5" y="335.6" width="2.8" height=".8" fill="#8fc5ec" opacity=".85"/><rect x="412.8" y="335.6" width="2.8" height=".8" fill="#8fc5ec" opacity=".85"/><rect x="373.6" y="346.0" width="2.2" height=".8" fill="#8fc5ec" opacity=".85"/><rect x="411.5" y="346.0" width="1.6" height=".8" fill="#8fc5ec" opacity=".85"/><rect x="455.4" y="254.2" width="2.8" height=".8" fill="#8fc5ec" opacity=".85"/><rect x="486.7" y="254.2" width="2.8" height=".8" fill="#8fc5ec" opacity=".85"/><rect x="441.8" y="262.5" width="1.6" height=".8" fill="#8fc5ec" opacity=".85"/><rect x="455.4" y="264.5" width="1.6" height=".8" fill="#8fc5ec" opacity=".85"/><rect x="470.8" y="262.5" width="2.8" height=".8" fill="#8fc5ec" opacity=".85"/><rect x="487.4" y="271.8" width="2.2" height=".8" fill="#8fc5ec" opacity=".85"/><rect x="442.8" y="288.1" width="1.6" height=".8" fill="#8fc5ec" opacity=".85"/><rect x="458.4" y="288.1" width="2.8" height=".8" fill="#8fc5ec" opacity=".85"/><rect x="474.7" y="288.1" width="2.8" height=".8" fill="#8fc5ec" opacity=".85"/><rect x="491.1" y="288.1" width="2.8" height=".8" fill="#8fc5ec" opacity=".85"/><rect x="442.8" y="298.1" width="1.6" height=".8" fill="#8fc5ec" opacity=".85"/><rect x="458.4" y="298.1" width="2.8" height=".8" fill="#8fc5ec" opacity=".85"/><rect x="458.4" y="320.7" width="1.6" height=".8" fill="#8fc5ec" opacity=".85"/><rect x="473.4" y="320.7" width="2.8" height=".8" fill="#8fc5ec" opacity=".85"/><rect x="442.8" y="340.7" width="2.2" height=".8" fill="#8fc5ec" opacity=".85"/><rect x="457.1" y="340.7" width="2.8" height=".8" fill="#8fc5ec" opacity=".85"/><rect x="471.8" y="340.7" width="1.6" height=".8" fill="#8fc5ec" opacity=".85"/><rect x="486.4" y="340.7" width="1.6" height=".8" fill="#8fc5ec" opacity=".85"/><rect x="508.0" y="252.9" width="2.2" height=".8" fill="#8fc5ec" opacity=".85"/><rect x="524.7" y="252.9" width="1.6" height=".8" fill="#8fc5ec" opacity=".85"/><rect x="508.0" y="342.7" width="2.8" height=".8" fill="#8fc5ec" opacity=".85"/><rect x="521.7" y="342.7" width="2.2" height=".8" fill="#8fc5ec" opacity=".85"/><rect x="537.0" y="342.7" width="1.6" height=".8" fill="#8fc5ec" opacity=".85"/><rect x="577.9" y="338.1" width="2.2" height=".8" fill="#8fc5ec" opacity=".85"/><rect x="595.2" y="338.1" width="2.8" height=".8" fill="#8fc5ec" opacity=".85"/><rect x="648.2" y="246.9" width="1.6" height=".8" fill="#8fc5ec" opacity=".85"/><rect x="94.3" y="352.9" width="1.6" height=".8" fill="#8fc5ec" opacity=".85"/><rect x="93.7" y="374.8" width="2.8" height=".8" fill="#8fc5ec" opacity=".85"/><rect x="107.6" y="374.8" width="2.2" height=".8" fill="#8fc5ec" opacity=".85"/><rect x="121.3" y="374.8" width="2.2" height=".8" fill="#8fc5ec" opacity=".85"/><rect x="134.9" y="374.8" width="1.6" height=".8" fill="#8fc5ec" opacity=".85"/><rect x="94.3" y="405.1" width="2.8" height=".8" fill="#8fc5ec" opacity=".85"/><rect x="107.6" y="405.1" width="2.8" height=".8" fill="#8fc5ec" opacity=".85"/><rect x="121.3" y="405.1" width="2.8" height=".8" fill="#8fc5ec" opacity=".85"/><rect x="134.9" y="405.1" width="2.2" height=".8" fill="#8fc5ec" opacity=".85"/><rect x="148.6" y="405.1" width="2.2" height=".8" fill="#8fc5ec" opacity=".85"/><rect x="94.3" y="429.4" width="2.8" height=".8" fill="#8fc5ec" opacity=".85"/><rect x="122.6" y="431.4" width="1.6" height=".8" fill="#8fc5ec" opacity=".85"/><rect x="147.2" y="429.8" width="2.2" height=".8" fill="#8fc5ec" opacity=".85"/><rect x="122.6" y="443.1" width="2.8" height=".8" fill="#8fc5ec" opacity=".85"/><rect x="150.6" y="443.1" width="2.8" height=".8" fill="#8fc5ec" opacity=".85"/><rect x="172.9" y="369.9" width="2.8" height=".8" fill="#8fc5ec" opacity=".85"/><rect x="188.8" y="369.9" width="1.6" height=".8" fill="#8fc5ec" opacity=".85"/><rect x="172.9" y="381.2" width="1.6" height=".8" fill="#8fc5ec" opacity=".85"/><rect x="188.8" y="381.2" width="2.2" height=".8" fill="#8fc5ec" opacity=".85"/><rect x="172.9" y="391.8" width="2.2" height=".8" fill="#8fc5ec" opacity=".85"/><rect x="188.8" y="391.8" width="2.8" height=".8" fill="#8fc5ec" opacity=".85"/><rect x="172.9" y="402.1" width="1.6" height=".8" fill="#8fc5ec" opacity=".85"/><rect x="188.8" y="402.1" width="2.2" height=".8" fill="#8fc5ec" opacity=".85"/><rect x="194.8" y="416.8" width="2.8" height=".8" fill="#8fc5ec" opacity=".85"/><rect x="170.2" y="421.1" width="2.8" height=".8" fill="#8fc5ec" opacity=".85"/><rect x="176.5" y="435.1" width="2.2" height=".8" fill="#8fc5ec" opacity=".85"/><rect x="196.5" y="435.1" width="1.6" height=".8" fill="#8fc5ec" opacity=".85"/><rect x="176.5" y="446.4" width="2.8" height=".8" fill="#8fc5ec" opacity=".85"/><rect x="200.5" y="451.0" width="1.6" height=".8" fill="#8fc5ec" opacity=".85"/><rect x="220.8" y="392.2" width="2.8" height=".8" fill="#8fc5ec" opacity=".85"/><rect x="236.1" y="351.2" width="2.8" height=".8" fill="#8fc5ec" opacity=".85"/><rect x="250.1" y="351.2" width="2.2" height=".8" fill="#8fc5ec" opacity=".85"/><rect x="263.7" y="360.2" width="1.6" height=".8" fill="#8fc5ec" opacity=".85"/><rect x="278.4" y="358.2" width="2.2" height=".8" fill="#8fc5ec" opacity=".85"/><rect x="240.4" y="379.5" width="1.6" height=".8" fill="#8fc5ec" opacity=".85"/><rect x="267.7" y="379.5" width="2.8" height=".8" fill="#8fc5ec" opacity=".85"/><rect x="252.8" y="387.8" width="2.2" height=".8" fill="#8fc5ec" opacity=".85"/><rect x="281.7" y="387.8" width="1.6" height=".8" fill="#8fc5ec" opacity=".85"/><rect x="237.8" y="389.8" width="2.2" height=".8" fill="#8fc5ec" opacity=".85"/><rect x="256.4" y="398.8" width="1.6" height=".8" fill="#8fc5ec" opacity=".85"/><rect x="281.7" y="401.5" width="2.8" height=".8" fill="#8fc5ec" opacity=".85"/><rect x="240.4" y="421.4" width="1.6" height=".8" fill="#8fc5ec" opacity=".85"/><rect x="275.4" y="420.8" width="2.8" height=".8" fill="#8fc5ec" opacity=".85"/><rect x="289.0" y="420.8" width="2.8" height=".8" fill="#8fc5ec" opacity=".85"/><rect x="261.7" y="428.8" width="2.8" height=".8" fill="#8fc5ec" opacity=".85"/><rect x="279.7" y="456.4" width="2.2" height=".8" fill="#8fc5ec" opacity=".85"/><rect x="306.0" y="350.2" width="1.6" height=".8" fill="#8fc5ec" opacity=".85"/><rect x="322.0" y="350.2" width="2.2" height=".8" fill="#8fc5ec" opacity=".85"/><rect x="338.3" y="350.2" width="2.2" height=".8" fill="#8fc5ec" opacity=".85"/><rect x="353.9" y="350.2" width="2.8" height=".8" fill="#8fc5ec" opacity=".85"/><rect x="306.0" y="360.5" width="2.2" height=".8" fill="#8fc5ec" opacity=".85"/><rect x="322.0" y="360.5" width="2.8" height=".8" fill="#8fc5ec" opacity=".85"/><rect x="338.3" y="360.5" width="2.8" height=".8" fill="#8fc5ec" opacity=".85"/><rect x="353.9" y="360.5" width="1.6" height=".8" fill="#8fc5ec" opacity=".85"/><rect x="306.0" y="387.8" width="2.8" height=".8" fill="#8fc5ec" opacity=".85"/><rect x="322.0" y="387.8" width="1.6" height=".8" fill="#8fc5ec" opacity=".85"/><rect x="338.3" y="387.8" width="1.6" height=".8" fill="#8fc5ec" opacity=".85"/><rect x="306.0" y="428.1" width="2.2" height=".8" fill="#8fc5ec" opacity=".85"/><rect x="350.3" y="433.8" width="2.2" height=".8" fill="#8fc5ec" opacity=".85"/><rect x="350.3" y="453.1" width="1.6" height=".8" fill="#8fc5ec" opacity=".85"/><rect x="373.6" y="356.5" width="1.6" height=".8" fill="#8fc5ec" opacity=".85"/><rect x="395.9" y="356.5" width="1.6" height=".8" fill="#8fc5ec" opacity=".85"/><rect x="411.5" y="356.5" width="2.2" height=".8" fill="#8fc5ec" opacity=".85"/><rect x="372.9" y="377.5" width="2.2" height=".8" fill="#8fc5ec" opacity=".85"/><rect x="388.5" y="377.5" width="1.6" height=".8" fill="#8fc5ec" opacity=".85"/><rect x="403.9" y="377.5" width="2.8" height=".8" fill="#8fc5ec" opacity=".85"/><rect x="372.9" y="392.5" width="2.2" height=".8" fill="#8fc5ec" opacity=".85"/><rect x="391.5" y="392.5" width="2.8" height=".8" fill="#8fc5ec" opacity=".85"/><rect x="410.5" y="392.5" width="1.6" height=".8" fill="#8fc5ec" opacity=".85"/><rect x="372.9" y="407.8" width="2.2" height=".8" fill="#8fc5ec" opacity=".85"/><rect x="391.5" y="407.8" width="2.8" height=".8" fill="#8fc5ec" opacity=".85"/><rect x="486.4" y="352.9" width="2.8" height=".8" fill="#8fc5ec" opacity=".85"/><rect x="440.5" y="365.5" width="1.6" height=".8" fill="#8fc5ec" opacity=".85"/><rect x="455.1" y="365.5" width="2.2" height=".8" fill="#8fc5ec" opacity=".85"/><rect x="469.8" y="365.5" width="2.2" height=".8" fill="#8fc5ec" opacity=".85"/><rect x="457.4" y="381.2" width="1.6" height=".8" fill="#8fc5ec" opacity=".85"/><rect x="472.4" y="381.2" width="1.6" height=".8" fill="#8fc5ec" opacity=".85"/><rect x="442.8" y="392.2" width="2.2" height=".8" fill="#8fc5ec" opacity=".85"/><rect x="456.1" y="392.2" width="2.2" height=".8" fill="#8fc5ec" opacity=".85"/><rect x="469.8" y="392.2" width="2.2" height=".8" fill="#8fc5ec" opacity=".85"/><rect x="484.7" y="392.2" width="2.2" height=".8" fill="#8fc5ec" opacity=".85"/><rect x="439.8" y="403.5" width="2.2" height=".8" fill="#8fc5ec" opacity=".85"/><rect x="457.4" y="403.5" width="2.8" height=".8" fill="#8fc5ec" opacity=".85"/><rect x="472.4" y="403.5" width="2.8" height=".8" fill="#8fc5ec" opacity=".85"/><rect x="459.8" y="415.5" width="1.6" height=".8" fill="#8fc5ec" opacity=".85"/><rect x="440.5" y="435.4" width="2.8" height=".8" fill="#8fc5ec" opacity=".85"/><rect x="475.7" y="435.4" width="1.6" height=".8" fill="#8fc5ec" opacity=".85"/><rect x="440.5" y="447.1" width="2.2" height=".8" fill="#8fc5ec" opacity=".85"/><rect x="460.4" y="447.1" width="1.6" height=".8" fill="#8fc5ec" opacity=".85"/><rect x="475.7" y="455.7" width="2.2" height=".8" fill="#8fc5ec" opacity=".85"/><rect x="508.0" y="360.5" width="2.8" height=".8" fill="#8fc5ec" opacity=".85"/><rect x="521.7" y="360.5" width="2.8" height=".8" fill="#8fc5ec" opacity=".85"/><rect x="537.0" y="360.5" width="2.2" height=".8" fill="#8fc5ec" opacity=".85"/><rect x="521.7" y="371.9" width="1.6" height=".8" fill="#8fc5ec" opacity=".85"/><rect x="537.0" y="370.9" width="2.8" height=".8" fill="#8fc5ec" opacity=".85"/><rect x="508.0" y="383.5" width="2.2" height=".8" fill="#8fc5ec" opacity=".85"/><rect x="508.0" y="393.8" width="2.8" height=".8" fill="#8fc5ec" opacity=".85"/><rect x="508.0" y="404.8" width="2.8" height=".8" fill="#8fc5ec" opacity=".85"/><rect x="524.7" y="443.1" width="2.8" height=".8" fill="#8fc5ec" opacity=".85"/><rect x="577.9" y="349.9" width="2.2" height=".8" fill="#8fc5ec" opacity=".85"/><rect x="595.2" y="349.9" width="1.6" height=".8" fill="#8fc5ec" opacity=".85"/><rect x="611.9" y="349.9" width="2.8" height=".8" fill="#8fc5ec" opacity=".85"/><rect x="577.9" y="360.5" width="2.8" height=".8" fill="#8fc5ec" opacity=".85"/><rect x="595.2" y="360.5" width="1.6" height=".8" fill="#8fc5ec" opacity=".85"/><rect x="611.9" y="360.5" width="1.6" height=".8" fill="#8fc5ec" opacity=".85"/><rect x="577.9" y="372.9" width="2.8" height=".8" fill="#8fc5ec" opacity=".85"/><rect x="595.2" y="372.9" width="1.6" height=".8" fill="#8fc5ec" opacity=".85"/><rect x="611.9" y="372.9" width="1.6" height=".8" fill="#8fc5ec" opacity=".85"/><rect x="577.9" y="384.5" width="2.2" height=".8" fill="#8fc5ec" opacity=".85"/><rect x="595.2" y="384.5" width="2.8" height=".8" fill="#8fc5ec" opacity=".85"/><rect x="611.9" y="384.5" width="2.8" height=".8" fill="#8fc5ec" opacity=".85"/><rect x="577.9" y="394.8" width="2.8" height=".8" fill="#8fc5ec" opacity=".85"/><rect x="595.2" y="394.8" width="1.6" height=".8" fill="#8fc5ec" opacity=".85"/><rect x="611.9" y="394.8" width="1.6" height=".8" fill="#8fc5ec" opacity=".85"/><rect x="577.9" y="406.8" width="2.8" height=".8" fill="#8fc5ec" opacity=".85"/><rect x="595.2" y="406.8" width="1.6" height=".8" fill="#8fc5ec" opacity=".85"/><rect x="576.9" y="438.1" width="2.8" height=".8" fill="#8fc5ec" opacity=".85"/><rect x="123.8" y="485.8" width="2.2" height=".8" fill="#8fc5ec" opacity=".85"/>
<text x="172.7" y="287.8" font-size="2.1" font-weight="bold" fill="#3a3000" font-family='"Liberation Sans", sans-serif'>Reference</text>
<text x="187.6" y="287.8" font-size="2.1" font-weight="bold" fill="#3a3000" font-family='"Liberation Sans", sans-serif'>Archives</text>
<text x="203.6" y="297.0" font-size="2.1" font-weight="bold" fill="#3a3000" font-family='"Liberation Sans", sans-serif'>Working</text>
<text x="172.7" y="320.9" font-size="2.1" font-weight="bold" fill="#3a3000" font-family='"Liberation Sans", sans-serif'>Backlog</text>
<text x="220.6" y="287.8" font-size="2.1" font-weight="bold" fill="#3a3000" font-family='"Liberation Sans", sans-serif'>Projects</text>
<text x="220.6" y="297.0" font-size="2.1" font-weight="bold" fill="#3a3000" font-family='"Liberation Sans", sans-serif'>Processes</text>
<text x="323.8" y="236.0" font-size="2.1" font-weight="bold" fill="#3a3000" font-family='"Liberation Sans", sans-serif'>Ideas</text>
<text x="200.3" y="444.1" font-size="2.1" font-weight="bold" fill="#3a3000" font-family='"Liberation Sans", sans-serif'>Side-ideas</text>
<text x="220.6" y="360.2" font-size="2.1" font-weight="bold" fill="#3a3000" font-family='"Liberation Sans", sans-serif'>Inbox</text>
<text x="263.5" y="353.3" font-size="2.1" font-weight="bold" fill="#3a3000" font-family='"Liberation Sans", sans-serif'>Zettel</text>
<text x="12.1" y="233.1" font-size="3.2" font-weight="bold" fill="#222" font-family='"Liberation Sans", sans-serif' textLength="28.0" lengthAdjust="spacingAndGlyphs">1. What&#x27;s new with notes?</text>
<text x="90.8" y="233.1" font-size="3.2" font-weight="bold" fill="#222" font-family='"Liberation Sans", sans-serif' textLength="20.2" lengthAdjust="spacingAndGlyphs">2. What is a note?</text>
<text x="169.8" y="233.1" font-size="3.2" font-weight="bold" fill="#222" font-family='"Liberation Sans", sans-serif' textLength="29.1" lengthAdjust="spacingAndGlyphs">3. A note-taking framework</text>
<text x="236.8" y="233.1" font-size="3.2" font-weight="bold" fill="#222" font-family='"Liberation Sans", sans-serif' textLength="11.2" lengthAdjust="spacingAndGlyphs">4. Capture</text>
<text x="303.2" y="233.1" font-size="3.2" font-weight="bold" fill="#222" font-family='"Liberation Sans", sans-serif' textLength="20.2" lengthAdjust="spacingAndGlyphs">5. Organize/Triage</text>
<text x="369.8" y="233.1" font-size="3.2" font-weight="bold" fill="#222" font-family='"Liberation Sans", sans-serif' textLength="11.2" lengthAdjust="spacingAndGlyphs">6. Linking</text>
<text x="436.8" y="233.1" font-size="3.2" font-weight="bold" fill="#222" font-family='"Liberation Sans", sans-serif' textLength="32.5" lengthAdjust="spacingAndGlyphs">7. Synthesis/sparking insight</text>
<text x="504.8" y="233.1" font-size="3.2" font-weight="bold" fill="#222" font-family='"Liberation Sans", sans-serif' textLength="25.8" lengthAdjust="spacingAndGlyphs">8. Building and sharing</text>
<text x="571.8" y="233.1" font-size="3.2" font-weight="bold" fill="#222" font-family='"Liberation Sans", sans-serif' textLength="15.7" lengthAdjust="spacingAndGlyphs">9. Maintenance</text>
<text x="639.8" y="233.1" font-size="3.2" font-weight="bold" fill="#222" font-family='"Liberation Sans", sans-serif' textLength="6.7" lengthAdjust="spacingAndGlyphs">10. al</text>
<text x="161.8" y="471.6" font-size="3.2" font-weight="bold" fill="#222" font-family='"Liberation Sans", sans-serif' textLength="14.6" lengthAdjust="spacingAndGlyphs">ss principles</text>
<text x="198.0" y="471.6" font-size="3.2" font-weight="bold" fill="#222" font-family='"Liberation Sans", sans-serif' textLength="10.1" lengthAdjust="spacingAndGlyphs">Questions</text>
<text x="233.9" y="471.6" font-size="3.2" font-weight="bold" fill="#222" font-family='"Liberation Sans", sans-serif' textLength="7.8" lengthAdjust="spacingAndGlyphs">Methods</text>
<text x="269.8" y="471.6" font-size="3.2" font-weight="bold" fill="#222" font-family='"Liberation Sans", sans-serif' textLength="13.4" lengthAdjust="spacingAndGlyphs">Distinctions</text>
<text x="341.4" y="471.6" font-size="3.2" font-weight="bold" fill="#222" font-family='"Liberation Sans", sans-serif' textLength="16.8" lengthAdjust="spacingAndGlyphs">History/context</text>
<text x="413.1" y="471.6" font-size="3.2" font-weight="bold" fill="#222" font-family='"Liberation Sans", sans-serif' textLength="5.6" lengthAdjust="spacingAndGlyphs">Value</text>
<text x="125.9" y="527.1" font-size="3.2" font-weight="bold" fill="#222" font-family='"Liberation Sans", sans-serif' textLength="10.1" lengthAdjust="spacingAndGlyphs">Epigraphs</text>
<text x="161.8" y="527.1" font-size="3.2" font-weight="bold" fill="#222" font-family='"Liberation Sans", sans-serif' textLength="19.0" lengthAdjust="spacingAndGlyphs">Reader challenges</text>
<text x="198.0" y="527.1" font-size="3.2" font-weight="bold" fill="#222" font-family='"Liberation Sans", sans-serif' textLength="6.7" lengthAdjust="spacingAndGlyphs">How to</text>
<text x="233.9" y="527.1" font-size="3.2" font-weight="bold" fill="#222" font-family='"Liberation Sans", sans-serif' textLength="17.9" lengthAdjust="spacingAndGlyphs">Practices/habits</text>
<text x="269.8" y="527.1" font-size="3.2" font-weight="bold" fill="#222" font-family='"Liberation Sans", sans-serif' textLength="13.4" lengthAdjust="spacingAndGlyphs">Making a PIE</text>
<text x="306.0" y="527.1" font-size="3.2" font-weight="bold" fill="#222" font-family='"Liberation Sans", sans-serif' textLength="10.1" lengthAdjust="spacingAndGlyphs">Rationale</text>
<text x="341.4" y="527.1" font-size="3.2" font-weight="bold" fill="#222" font-family='"Liberation Sans", sans-serif' textLength="19.0" lengthAdjust="spacingAndGlyphs">Stories/analogies</text>
<text x="413.1" y="527.1" font-size="3.2" font-weight="bold" fill="#222" font-family='"Liberation Sans", sans-serif' textLength="19.0" lengthAdjust="spacingAndGlyphs">Why we take notes</text>
<text x="447.4" y="527.1" font-size="3.2" font-weight="bold" fill="#222" font-family='"Liberation Sans", sans-serif' textLength="21.3" lengthAdjust="spacingAndGlyphs">Abstractions/theory</text>
<text x="486.1" y="527.1" font-size="3.2" font-weight="bold" fill="#222" font-family='"Liberation Sans", sans-serif' textLength="11.2" lengthAdjust="spacingAndGlyphs">Tools/tech</text>
</svg>
</div>
<div id="rw" class="abs">
<div class="abs" style="left:0;top:0;width:662px;height:12.7px;background:#f4f4f4"></div>
<div class="tl" style="left:3.3999999999999546px;background:#ee5f57;border:0.4px solid #d64a42;box-sizing:border-box"></div>
<div class="tl" style="left:12.1px;background:#f5bd2f;border:0.4px solid #dca226;box-sizing:border-box"></div>
<div class="tl" style="left:20.800000000000047px;background:#5fc638;border:0.4px solid #4aa82a;box-sizing:border-box"></div>
<svg class="abs" style="left:305.6px;top:2.4px" width="6" height="8" viewBox="0 0 6 8"><path d="M.5.5h3.5l1.5 1.5v5.5h-5z" fill="#fff" stroke="#aaa" stroke-width=".6"/><rect x="1.6" y="3" width="2.4" height="3.2" fill="#f0c030"/></svg>
<span class="t" style="left:313.79999999999995px;top:3.5px;font-size:6.1px;font-weight:bold;color:#3a3a3a">Duly Noted.tbx</span>
<div class="abs" style="left:0;top:12.7px;width:662px;height:12px;background:#e4e4e4"></div>
<svg class="abs" style="left:0;top:12.7px" width="662" height="12" viewBox="0 0 662 12">
<path d="M12.5 12L15 0.6H648.5L651.5 12z" fill="#dfc6e0"/><path d="M648.3 .6L651.3 12" stroke="#777" stroke-width="1" fill="none"/>
<circle cx="7.5" cy="6.5" r="3.7" fill="#f4f4f4" stroke="#b5b5b5" stroke-width=".6"/>
<rect x="20.6" y="2" width="8" height="8.5" fill="#fff" stroke="#999" stroke-width=".5"/><path d="M22 4h1.5M24.5 4h3M23 6.2h1.5M25 6.2h2.5M22 8.4h1.5M24.5 8.4h3" stroke="#444" stroke-width=".7"/><circle cx="28.4" cy="2.4" r="1.5" fill="#ddd" stroke="#888" stroke-width=".4"/>
<circle cx="655.6" cy="6.8" r=".8" fill="#999"/>
</svg>
<span class="t" style="left:31.5px;top:17px;font-size:6.65px;color:#111;-webkit-text-stroke:.12px #111">Outline: Duly Noted</span>
<div class="abs" style="left:0;top:24.7px;width:2px;height:710px;background:linear-gradient(90deg,#d2d2d2,#f4f4f4)"></div>
<div class="abs" style="left:0;top:24.7px;width:286.5px;height:3px;background:linear-gradient(#dcdcdc,#fff)"></div>
<div class="abs" style="left:286.4px;top:24.7px;width:4.8px;height:710px;background:#f3f3f3;border-left:.6px solid #d9d9d9;border-right:.6px solid #dcdcdc;box-sizing:border-box"></div>
<div class="sep" style="left:13.5px;top:34.10px;width:272.0px"></div>
<div class="sepbox" style="left:81.29999999999995px;top:29.60px;width:137px;height:10px">META</div>
<div class="orow" style="top:39.40px;">
<span class="t" style="left:35.7px;color:#1e1e1e;">Prototypes</span></div>
<div class="orow" style="top:49.00px;">
<span class="t" style="left:35.7px;color:#1e1e1e;">Templates</span></div>
<div class="orow" style="top:58.59px;">
<svg class="abs" style="left:41.6px;top:1.2px" width="7" height="7.5" viewBox="0 0 7 7.5"><path d="M5.6 .8L1.6 5.6" stroke="#aaa" stroke-width=".6" fill="none"/><path d="M.8 .5l4.4 5.4" stroke="#222" stroke-width="1" fill="none"/><path d="M1 6.9q2.2 -1.8 5 -.2" stroke="#999" stroke-width=".6" fill="none"/></svg>
<span class="t" style="left:49.6px;color:#3c3c3c;">Markdown page</span></div>
<div class="orow" style="top:68.19px;">
<svg class="abs" style="left:41.6px;top:1.2px" width="7" height="7.5" viewBox="0 0 7 7.5"><path d="M5.6 .8L1.6 5.6" stroke="#aaa" stroke-width=".6" fill="none"/><path d="M.8 .5l4.4 5.4" stroke="#222" stroke-width="1" fill="none"/><path d="M1 6.9q2.2 -1.8 5 -.2" stroke="#999" stroke-width=".6" fill="none"/></svg>
<span class="t" style="left:49.6px;color:#3c3c3c;">ProcessedMarkdown</span></div>
<div class="sep" style="left:13.5px;top:82.09px;width:272.0px"></div>
<div class="sepbox" style="left:81.29999999999995px;top:77.59px;width:137px;height:10px">DRAFTS</div>
<div class="orow" style="top:87.39px;">
<span class="t" style="left:35.7px;color:#1f4a44;font-weight:bold;">2022-03</span></div>
<div class="orow" style="top:96.99px;">
<span class="t" style="left:35.7px;color:#1f4a44;font-weight:bold;">2022-02</span></div>
<div class="sep" style="left:13.5px;top:110.88px;width:272.0px"></div>
<div class="sepbox" style="left:81.29999999999995px;top:106.38px;width:137px;height:10px">WORKING</div>
<div class="orow" style="top:116.18px;">
<span class="t" style="left:35.7px;color:#1e1e1e;">Meta stuff</span></div>
<div class="orow" style="top:125.78px;">
<span class="t" style="left:35.7px;color:#1e1e1e;">Notes</span></div>
<div class="orow" style="top:135.38px;">
<span class="t" style="left:49.6px;color:#a0881f;">Memory palaces</span></div>
<div class="orow" style="top:144.98px;">
<span class="t" style="left:49.6px;color:#a0881f;">spatial organization</span></div>
<div class="orow" style="top:154.57px;">
<span class="t" style="left:49.6px;color:#a0881f;">Not finding older notes</span></div>
<div class="orow" style="top:164.17px;">
<span class="t" style="left:49.6px;color:#a0881f;">Production tools vs. thinking tools</span></div>
<div class="orow" style="top:173.77px;">
<span class="t" style="left:49.6px;color:#a0881f;">Thinking vs. documenting</span></div>
<div class="orow" style="top:183.37px;">
<span class="t" style="left:49.6px;color:#a0881f;">Photos of whiteboard sticky dumps</span></div>
<div class="orow" style="top:192.97px;">
<span class="t" style="left:49.6px;color:#a0881f;">How to develop ideas</span></div>
<div class="orow" style="top:202.56px;">
<span class="t" style="left:49.6px;color:#a0881f;">Shitty first drafts</span></div>
<div class="orow" style="top:212.16px;">
<span class="t" style="left:49.6px;color:#9c2f26;">Emergent structure</span></div>
<div class="orow" style="top:221.76px;">
<span class="t" style="left:49.6px;color:#a0881f;">Personal traits</span></div>
<div class="orow" style="top:231.36px;">
<span class="t" style="left:49.6px;color:#a0881f;">personal objectives</span></div>
<div class="orow" style="top:240.96px;">
<span class="t" style="left:49.6px;color:#a0881f;">Personal philosophiies</span></div>
<div class="orow" style="top:250.55px;">
<span class="t" style="left:49.6px;color:#a0881f;">Focus on the things that matter, delegate the rest</span></div>
<div class="orow" style="top:260.15px;">
<span class="t" style="left:49.6px;color:#a0881f;">Notifications</span></div>
<div class="orow" style="top:269.75px;">
<span class="t" style="left:49.6px;color:#a0881f;">Curate your inputs and outputs</span></div>
<div class="orow" style="top:279.35px;">
<span class="t" style="left:49.6px;color:#a0881f;">Don&#x27;t put off for later what you can do today</span></div>
<div class="orow" style="top:288.95px;">
<span class="t" style="left:49.6px;color:#a0881f;">time</span></div>
<div class="orow" style="top:298.54px;background:#f3f0db;border-left:2px solid #b9ae68;box-sizing:border-box;box-shadow:inset 0 .7px #e2dcb8,inset 0 -.7px #e2dcb8;">
<svg class="abs" style="left:45.5px;top:1.5px" width="14" height="7" viewBox="0 0 14 7"><path d="M1.9 .5h1.6v2.5h1.1l-1.9 2.4-1.9-2.4h1.1z" stroke="#9a9a9a" stroke-width=".55" fill="#f8f8f4"/><circle cx="10.4" cy="3.3" r="2" fill="none" stroke="#bbb" stroke-width=".5"/><circle cx="10.4" cy="3.3" r=".6" fill="#bbb"/></svg>
<span class="t" style="left:61.5px;color:#a0881f;">Give it time</span></div>
<div class="orow" style="top:308.14px;">
<span class="t" style="left:63.5px;color:#a0881f;">Time and cadence</span></div>
<div class="orow" style="top:317.74px;">
<span class="t" style="left:63.5px;color:#a0881f;">tension when trying new apps</span></div>
<div class="orow" style="top:327.34px;">
<span class="t" style="left:49.6px;color:#a0881f;">the trap of productivity</span></div>
<div class="orow" style="top:336.94px;">
<span class="t" style="left:49.6px;color:#a0881f;">A lifelong endeavor</span></div>
<div class="orow" style="top:346.53px;">
<span class="t" style="left:49.6px;color:#a0881f;">Loose hold on beliefs</span></div>
<div class="orow" style="top:356.13px;">
<span class="t" style="left:49.6px;color:#a0881f;">Commitment to self-actualization</span></div>
<div class="orow" style="top:365.73px;">
<span class="t" style="left:49.6px;color:#a0881f;">Care for your instrument</span></div>
<div class="orow" style="top:375.33px;">
<span class="t" style="left:49.6px;color:#a0881f;">Work with the grain</span></div>
<div class="orow" style="top:384.93px;">
<span class="t" style="left:49.6px;color:#a0881f;">Work with your grain</span></div>
<div class="orow" style="top:394.52px;">
<span class="t" style="left:49.6px;color:#a0881f;">Learn to love deadlines</span></div>
<div class="orow" style="top:404.12px;">
<span class="t" style="left:49.6px;color:#a0881f;">Meta-principles</span></div>
<div class="orow" style="top:413.72px;">
<span class="t" style="left:49.6px;color:#a0881f;">Working on your self</span></div>
<div class="orow" style="top:423.32px;">
<span class="t" style="left:49.6px;color:#a0881f;">A lifelong commitment to learning</span></div>
<div class="orow" style="top:432.92px;">
<span class="t" style="left:49.6px;color:#a0881f;">Caring for your instrument</span></div>
<div class="orow" style="top:442.51px;">
<span class="t" style="left:49.6px;color:#a0881f;">Time and cadence</span></div>
<div class="orow" style="top:452.11px;">
<span class="t" style="left:49.6px;color:#a0881f;">Mutability</span></div>
<div class="orow" style="top:461.71px;">
<span class="t" style="left:49.6px;color:#a0881f;">Overcoming resistance to reflection</span></div>
<div class="orow" style="top:471.31px;">
<span class="t" style="left:49.6px;color:#a0881f;">Overcoming resistance to capture</span></div>
<div class="orow" style="top:480.91px;">
<span class="t" style="left:49.6px;color:#a0881f;">Journaling for self-reflection and guidance</span></div>
<div class="orow" style="top:490.50px;">
<span class="t" style="left:49.6px;color:#a0881f;">Tech issues vs. process/discipline issues</span></div>
<div class="orow" style="top:500.10px;">
<span class="t" style="left:49.6px;color:#a0881f;">Work with the technology&#x27;s grain</span></div>
<div class="orow" style="top:509.70px;">
<span class="t" style="left:63.5px;color:#a0881f;">ISO dates</span></div>
<div class="orow" style="top:519.30px;">
<span class="t" style="left:49.6px;color:#a0881f;">Automate everything</span></div>
<div class="orow" style="top:528.90px;">
<span class="t" style="left:49.6px;color:#a0881f;">Be consistent</span></div>
<div class="orow" style="top:538.49px;">
<span class="t" style="left:49.6px;color:#a0881f;">Own your information / Avoid lock-in</span></div>
<div class="orow" style="top:548.09px;">
<span class="t" style="left:49.6px;color:#a0881f;">Recursion —  working on the working</span></div>
<div class="orow" style="top:557.69px;">
<span class="t" style="left:49.6px;color:#a0881f;">file formats</span></div>
<div class="orow" style="top:567.29px;">
<span class="t" style="left:63.5px;color:#a0881f;">Plain text / Markdown</span></div>
<div class="orow" style="top:576.89px;">
<span class="t" style="left:63.5px;color:#a0881f;">HTML</span></div>
<div class="orow" style="top:586.48px;">
<span class="t" style="left:63.5px;color:#a0881f;">PDF</span></div>
<div class="orow" style="top:596.08px;">
<span class="t" style="left:63.5px;color:#a0881f;">Various image formats</span></div>
<div class="orow" style="top:605.68px;">
<span class="t" style="left:49.6px;color:#a0881f;">The risks of &quot;productivity porn&quot;</span></div>
<div class="orow" style="top:615.28px;">
<span class="t" style="left:49.6px;color:#a0881f;">Building a personal knowledge management system</span></div>
<div class="orow" style="top:624.88px;">
<span class="t" style="left:49.6px;color:#a0881f;">Working with the grain</span></div>
<div class="orow" style="top:634.47px;">
<span class="t" style="left:49.6px;color:#a0881f;">How to evolve the system so it grows with you</span></div>
<div class="orow" style="top:644.07px;">
<span class="t" style="left:49.6px;color:#a0881f;">Building a PKM takes time, patience, and commitment</span></div>
<div class="orow" style="top:653.67px;">
<span class="t" style="left:49.6px;color:#a0881f;">Reevaluating system components</span></div>
<div class="orow" style="top:663.27px;">
<span class="t" style="left:49.6px;color:#a0881f;">How to decide whether the system is working</span></div>
<div class="orow" style="top:672.87px;">
<span class="t" style="left:49.6px;color:#a0881f;">How to look for good feedback</span></div>
<div class="orow" style="top:682.46px;">
<span class="t" style="left:49.6px;color:#a0881f;">The challenges of evaluating note-taking systems</span></div>
<div class="orow" style="top:692.06px;">
<span class="t" style="left:49.6px;color:#a0881f;">Doing the work vs. working on the system</span></div>
<div class="orow" style="top:701.66px;">
<span class="t" style="left:49.6px;color:#a0881f;">A Personal Information Architecture</span></div>
<div class="orow" style="top:711.26px;">
<span class="t" style="left:49.6px;color:#a0881f;">How to select PIE components</span></div>
<div class="orow" style="top:720.86px;">
<span class="t" style="left:49.6px;color:#a0881f;">How to select note-taking tools</span></div>
<div class="orow" style="top:730.45px;">
<span class="t" style="left:49.6px;color:#a0881f;">Why this all matters</span></div>
<svg class="abs" style="left:0;top:24.7px;pointer-events:none" width="286" height="709" viewBox="0 0 286 709"><path d="M7.10 17.60l3 1.7-3 1.7z" fill="#3c3c3c"/><rect x="14.40" y="17.80" width="3.3" height="3" rx=".35" fill="#f3e27a" stroke="#6f6428" stroke-width=".7"/><path d="M14.40 18.60h3.2" stroke="#6f6428" stroke-width=".5"/><path d="M7.00 27.30h3l-1.5 3.5z" fill="#3c3c3c"/><rect x="14.40" y="27.40" width="3.3" height="3" rx=".35" fill="#f3e27a" stroke="#6f6428" stroke-width=".7"/><path d="M14.40 28.20h3.2" stroke="#6f6428" stroke-width=".5"/><path d="M20.80 36.79l3 1.7-3 1.7z" fill="#3c3c3c"/><rect x="28.30" y="35.29" width="3.4" height="6.5" rx=".7" fill="#f6eca0" stroke="#94843a" stroke-width=".7"/><path d="M28.50 35.79h3" stroke="#94843a" stroke-width=".9"/><path d="M28.30 37.19h3.4" stroke="#94843a" stroke-width=".45"/><rect x="28.30" y="44.89" width="3.4" height="6.5" rx=".7" fill="#f6eca0" stroke="#94843a" stroke-width=".7"/><path d="M28.50 45.39h3" stroke="#94843a" stroke-width=".9"/><path d="M28.30 46.79h3.4" stroke="#94843a" stroke-width=".45"/><path d="M7.10 65.59l3 1.7-3 1.7z" fill="#3c3c3c"/><rect x="14.40" y="65.79" width="3.3" height="3" rx=".35" fill="#e9e890" stroke="#33574f" stroke-width=".7"/><path d="M14.40 66.59h3.2" stroke="#33574f" stroke-width=".5"/><path d="M7.10 75.19l3 1.7-3 1.7z" fill="#3c3c3c"/><rect x="14.40" y="75.39" width="3.3" height="3" rx=".35" fill="#e9e890" stroke="#33574f" stroke-width=".7"/><path d="M14.40 76.19h3.2" stroke="#33574f" stroke-width=".5"/><path d="M7.10 94.38l3 1.7-3 1.7z" fill="#3c3c3c"/><rect x="14.40" y="94.58" width="3.3" height="3" rx=".35" fill="#f3e27a" stroke="#6f6428" stroke-width=".7"/><path d="M14.40 95.38h3.2" stroke="#6f6428" stroke-width=".5"/><path d="M7.00 104.08h3l-1.5 3.5z" fill="#3c3c3c"/><rect x="14.40" y="104.18" width="3.3" height="3" rx=".35" fill="#f3e27a" stroke="#6f6428" stroke-width=".7"/><path d="M14.40 104.98h3.2" stroke="#6f6428" stroke-width=".5"/><rect x="28.40" y="113.78" width="3.3" height="3" rx=".35" fill="#f8efa6" stroke="#bda535" stroke-width=".7"/><path d="M28.40 114.58h3.2" stroke="#bda535" stroke-width=".5"/><path d="M28.10 114.28l-1.8 .9 1.8 .9z" fill="#bda535"/><rect x="28.30" y="121.68" width="3.4" height="6.5" rx=".7" fill="#f8efa6" stroke="#bda535" stroke-width=".7"/><path d="M28.50 122.18h3" stroke="#bda535" stroke-width=".9"/><path d="M28.30 123.58h3.4" stroke="#bda535" stroke-width=".45"/><path d="M31.90 123.88l1.8 .9-1.8 .9z" fill="#bda535"/><rect x="28.30" y="131.27" width="3.4" height="6.5" rx=".7" fill="#f8efa6" stroke="#bda535" stroke-width=".7"/><path d="M28.50 131.77h3" stroke="#bda535" stroke-width=".9"/><path d="M28.30 133.17h3.4" stroke="#bda535" stroke-width=".45"/><rect x="28.30" y="140.87" width="3.4" height="6.5" rx=".7" fill="#f8efa6" stroke="#bda535" stroke-width=".7"/><path d="M28.50 141.37h3" stroke="#bda535" stroke-width=".9"/><path d="M28.30 142.77h3.4" stroke="#bda535" stroke-width=".45"/><path d="M28.10 143.07l-1.8 .9 1.8 .9z" fill="#bda535"/><rect x="28.30" y="150.47" width="3.4" height="6.5" rx=".7" fill="#f8efa6" stroke="#bda535" stroke-width=".7"/><path d="M28.50 150.97h3" stroke="#bda535" stroke-width=".9"/><path d="M28.30 152.37h3.4" stroke="#bda535" stroke-width=".45"/><path d="M31.90 152.67l1.8 .9-1.8 .9z" fill="#bda535"/><rect x="28.30" y="160.07" width="3.4" height="6.5" rx=".7" fill="#f8efa6" stroke="#bda535" stroke-width=".7"/><path d="M28.50 160.57h3" stroke="#bda535" stroke-width=".9"/><path d="M28.30 161.97h3.4" stroke="#bda535" stroke-width=".45"/><path d="M28.10 162.27l-1.8 .9 1.8 .9z" fill="#bda535"/><rect x="28.30" y="169.67" width="3.4" height="6.5" rx=".7" fill="#f8efa6" stroke="#bda535" stroke-width=".7"/><path d="M28.50 170.17h3" stroke="#bda535" stroke-width=".9"/><path d="M28.30 171.57h3.4" stroke="#bda535" stroke-width=".45"/><rect x="28.30" y="179.26" width="3.4" height="6.5" rx=".7" fill="#f8efa6" stroke="#bda535" stroke-width=".7"/><path d="M28.50 179.76h3" stroke="#bda535" stroke-width=".9"/><path d="M28.30 181.16h3.4" stroke="#bda535" stroke-width=".45"/><rect x="28.40" y="190.56" width="3.3" height="3" rx=".35" fill="#fbd9c8" stroke="#a5342a" stroke-width=".7"/><path d="M28.40 191.36h3.2" stroke="#a5342a" stroke-width=".5"/><path d="M20.80 199.96l3 1.7-3 1.7z" fill="#3c3c3c"/><rect x="28.40" y="200.16" width="3.3" height="3" rx=".35" fill="#f8efa6" stroke="#bda535" stroke-width=".7"/><path d="M28.40 200.96h3.2" stroke="#bda535" stroke-width=".5"/><path d="M20.80 209.56l3 1.7-3 1.7z" fill="#3c3c3c"/><rect x="28.40" y="209.76" width="3.3" height="3" rx=".35" fill="#f8efa6" stroke="#bda535" stroke-width=".7"/><path d="M28.40 210.56h3.2" stroke="#bda535" stroke-width=".5"/><path d="M20.80 219.16l3 1.7-3 1.7z" fill="#3c3c3c"/><rect x="28.40" y="219.36" width="3.3" height="3" rx=".35" fill="#f8efa6" stroke="#bda535" stroke-width=".7"/><path d="M28.40 220.16h3.2" stroke="#bda535" stroke-width=".5"/><rect x="28.40" y="228.95" width="3.3" height="3" rx=".35" fill="#f8efa6" stroke="#bda535" stroke-width=".7"/><path d="M28.40 229.75h3.2" stroke="#bda535" stroke-width=".5"/><rect x="28.40" y="238.55" width="3.3" height="3" rx=".35" fill="#f8efa6" stroke="#bda535" stroke-width=".7"/><path d="M28.40 239.35h3.2" stroke="#bda535" stroke-width=".5"/><rect x="28.30" y="246.45" width="3.4" height="6.5" rx=".7" fill="#f8efa6" stroke="#bda535" stroke-width=".7"/><path d="M28.50 246.95h3" stroke="#bda535" stroke-width=".9"/><path d="M28.30 248.35h3.4" stroke="#bda535" stroke-width=".45"/><rect x="28.30" y="256.05" width="3.4" height="6.5" rx=".7" fill="#f8efa6" stroke="#bda535" stroke-width=".7"/><path d="M28.50 256.55h3" stroke="#bda535" stroke-width=".9"/><path d="M28.30 257.95h3.4" stroke="#bda535" stroke-width=".45"/><path d="M20.70 267.25h3l-1.5 3.5z" fill="#3c3c3c"/><rect x="28.30" y="265.65" width="3.4" height="6.5" rx=".7" fill="#f8efa6" stroke="#bda535" stroke-width=".7"/><path d="M28.50 266.15h3" stroke="#bda535" stroke-width=".9"/><path d="M28.30 267.55h3.4" stroke="#bda535" stroke-width=".45"/><rect x="42.30" y="275.24" width="3.4" height="6.5" rx=".7" fill="#f8efa6" stroke="#bda535" stroke-width=".7"/><path d="M42.50 275.74h3" stroke="#bda535" stroke-width=".9"/><path d="M42.30 277.14h3.4" stroke="#bda535" stroke-width=".45"/><rect x="42.40" y="286.54" width="3.3" height="3" rx=".35" fill="#f8efa6" stroke="#bda535" stroke-width=".7"/><path d="M42.40 287.34h3.2" stroke="#bda535" stroke-width=".5"/><rect x="42.30" y="294.44" width="3.4" height="6.5" rx=".7" fill="#f8efa6" stroke="#bda535" stroke-width=".7"/><path d="M42.50 294.94h3" stroke="#bda535" stroke-width=".9"/><path d="M42.30 296.34h3.4" stroke="#bda535" stroke-width=".45"/><rect x="28.30" y="304.04" width="3.4" height="6.5" rx=".7" fill="#f8efa6" stroke="#bda535" stroke-width=".7"/><path d="M28.50 304.54h3" stroke="#bda535" stroke-width=".9"/><path d="M28.30 305.94h3.4" stroke="#bda535" stroke-width=".45"/><rect x="28.30" y="313.64" width="3.4" height="6.5" rx=".7" fill="#f8efa6" stroke="#bda535" stroke-width=".7"/><path d="M28.50 314.14h3" stroke="#bda535" stroke-width=".9"/><path d="M28.30 315.54h3.4" stroke="#bda535" stroke-width=".45"/><rect x="28.40" y="324.93" width="3.3" height="3" rx=".35" fill="#f8efa6" stroke="#bda535" stroke-width=".7"/><path d="M28.40 325.73h3.2" stroke="#bda535" stroke-width=".5"/><rect x="28.40" y="334.53" width="3.3" height="3" rx=".35" fill="#f8efa6" stroke="#bda535" stroke-width=".7"/><path d="M28.40 335.33h3.2" stroke="#bda535" stroke-width=".5"/><rect x="28.30" y="342.43" width="3.4" height="6.5" rx=".7" fill="#f8efa6" stroke="#bda535" stroke-width=".7"/><path d="M28.50 342.93h3" stroke="#bda535" stroke-width=".9"/><path d="M28.30 344.33h3.4" stroke="#bda535" stroke-width=".45"/><rect x="28.40" y="353.73" width="3.3" height="3" rx=".35" fill="#f8efa6" stroke="#bda535" stroke-width=".7"/><path d="M28.40 354.53h3.2" stroke="#bda535" stroke-width=".5"/><rect x="28.30" y="361.63" width="3.4" height="6.5" rx=".7" fill="#f8efa6" stroke="#bda535" stroke-width=".7"/><path d="M28.50 362.13h3" stroke="#bda535" stroke-width=".9"/><path d="M28.30 363.53h3.4" stroke="#bda535" stroke-width=".45"/><rect x="28.40" y="372.92" width="3.3" height="3" rx=".35" fill="#f8efa6" stroke="#bda535" stroke-width=".7"/><path d="M28.40 373.72h3.2" stroke="#bda535" stroke-width=".5"/><rect x="28.30" y="380.82" width="3.4" height="6.5" rx=".7" fill="#f8efa6" stroke="#bda535" stroke-width=".7"/><path d="M28.50 381.32h3" stroke="#bda535" stroke-width=".9"/><path d="M28.30 382.72h3.4" stroke="#bda535" stroke-width=".45"/><rect x="28.30" y="390.42" width="3.4" height="6.5" rx=".7" fill="#f8efa6" stroke="#bda535" stroke-width=".7"/><path d="M28.50 390.92h3" stroke="#bda535" stroke-width=".9"/><path d="M28.30 392.32h3.4" stroke="#bda535" stroke-width=".45"/><rect x="28.40" y="401.72" width="3.3" height="3" rx=".35" fill="#f8efa6" stroke="#bda535" stroke-width=".7"/><path d="M28.40 402.52h3.2" stroke="#bda535" stroke-width=".5"/><rect x="28.30" y="409.62" width="3.4" height="6.5" rx=".7" fill="#f8efa6" stroke="#bda535" stroke-width=".7"/><path d="M28.50 410.12h3" stroke="#bda535" stroke-width=".9"/><path d="M28.30 411.52h3.4" stroke="#bda535" stroke-width=".45"/><rect x="28.30" y="419.21" width="3.4" height="6.5" rx=".7" fill="#f8efa6" stroke="#bda535" stroke-width=".7"/><path d="M28.50 419.71h3" stroke="#bda535" stroke-width=".9"/><path d="M28.30 421.11h3.4" stroke="#bda535" stroke-width=".45"/><rect x="28.30" y="428.81" width="3.4" height="6.5" rx=".7" fill="#f8efa6" stroke="#bda535" stroke-width=".7"/><path d="M28.50 429.31h3" stroke="#bda535" stroke-width=".9"/><path d="M28.30 430.71h3.4" stroke="#bda535" stroke-width=".45"/><rect x="28.30" y="438.41" width="3.4" height="6.5" rx=".7" fill="#f8efa6" stroke="#bda535" stroke-width=".7"/><path d="M28.50 438.91h3" stroke="#bda535" stroke-width=".9"/><path d="M28.30 440.31h3.4" stroke="#bda535" stroke-width=".45"/><rect x="28.30" y="448.01" width="3.4" height="6.5" rx=".7" fill="#f8efa6" stroke="#bda535" stroke-width=".7"/><path d="M28.50 448.51h3" stroke="#bda535" stroke-width=".9"/><path d="M28.30 449.91h3.4" stroke="#bda535" stroke-width=".45"/><rect x="28.30" y="457.61" width="3.4" height="6.5" rx=".7" fill="#f8efa6" stroke="#bda535" stroke-width=".7"/><path d="M28.50 458.11h3" stroke="#bda535" stroke-width=".9"/><path d="M28.30 459.51h3.4" stroke="#bda535" stroke-width=".45"/><rect x="28.40" y="468.90" width="3.3" height="3" rx=".35" fill="#f8efa6" stroke="#bda535" stroke-width=".7"/><path d="M28.40 469.70h3.2" stroke="#bda535" stroke-width=".5"/><path d="M20.70 478.40h3l-1.5 3.5z" fill="#3c3c3c"/><rect x="28.30" y="476.80" width="3.4" height="6.5" rx=".7" fill="#f8efa6" stroke="#bda535" stroke-width=".7"/><path d="M28.50 477.30h3" stroke="#bda535" stroke-width=".9"/><path d="M28.30 478.70h3.4" stroke="#bda535" stroke-width=".45"/><rect x="42.40" y="488.10" width="3.3" height="3" rx=".35" fill="#f8efa6" stroke="#bda535" stroke-width=".7"/><path d="M42.40 488.90h3.2" stroke="#bda535" stroke-width=".5"/><rect x="28.30" y="496.00" width="3.4" height="6.5" rx=".7" fill="#f8efa6" stroke="#bda535" stroke-width=".7"/><path d="M28.50 496.50h3" stroke="#bda535" stroke-width=".9"/><path d="M28.30 497.90h3.4" stroke="#bda535" stroke-width=".45"/><rect x="28.30" y="505.60" width="3.4" height="6.5" rx=".7" fill="#f8efa6" stroke="#bda535" stroke-width=".7"/><path d="M28.50 506.10h3" stroke="#bda535" stroke-width=".9"/><path d="M28.30 507.50h3.4" stroke="#bda535" stroke-width=".45"/><rect x="28.40" y="516.89" width="3.3" height="3" rx=".35" fill="#f8efa6" stroke="#bda535" stroke-width=".7"/><path d="M28.40 517.69h3.2" stroke="#bda535" stroke-width=".5"/><rect x="28.30" y="524.79" width="3.4" height="6.5" rx=".7" fill="#f8efa6" stroke="#bda535" stroke-width=".7"/><path d="M28.50 525.29h3" stroke="#bda535" stroke-width=".9"/><path d="M28.30 526.69h3.4" stroke="#bda535" stroke-width=".45"/><path d="M20.70 535.99h3l-1.5 3.5z" fill="#3c3c3c"/><rect x="28.30" y="534.39" width="3.4" height="6.5" rx=".7" fill="#f8efa6" stroke="#bda535" stroke-width=".7"/><path d="M28.50 534.89h3" stroke="#bda535" stroke-width=".9"/><path d="M28.30 536.29h3.4" stroke="#bda535" stroke-width=".45"/><rect x="42.30" y="543.99" width="3.4" height="6.5" rx=".7" fill="#f8efa6" stroke="#bda535" stroke-width=".7"/><path d="M42.50 544.49h3" stroke="#bda535" stroke-width=".9"/><path d="M42.30 545.89h3.4" stroke="#bda535" stroke-width=".45"/><rect x="42.40" y="555.29" width="3.3" height="3" rx=".35" fill="#f8efa6" stroke="#bda535" stroke-width=".7"/><path d="M42.40 556.09h3.2" stroke="#bda535" stroke-width=".5"/><rect x="42.40" y="564.88" width="3.3" height="3" rx=".35" fill="#f8efa6" stroke="#bda535" stroke-width=".7"/><path d="M42.40 565.68h3.2" stroke="#bda535" stroke-width=".5"/><rect x="42.40" y="574.48" width="3.3" height="3" rx=".35" fill="#f8efa6" stroke="#bda535" stroke-width=".7"/><path d="M42.40 575.28h3.2" stroke="#bda535" stroke-width=".5"/><rect x="28.30" y="582.38" width="3.4" height="6.5" rx=".7" fill="#f8efa6" stroke="#bda535" stroke-width=".7"/><path d="M28.50 582.88h3" stroke="#bda535" stroke-width=".9"/><path d="M28.30 584.28h3.4" stroke="#bda535" stroke-width=".45"/><rect x="28.30" y="591.98" width="3.4" height="6.5" rx=".7" fill="#f8efa6" stroke="#bda535" stroke-width=".7"/><path d="M28.50 592.48h3" stroke="#bda535" stroke-width=".9"/><path d="M28.30 593.88h3.4" stroke="#bda535" stroke-width=".45"/><rect x="28.30" y="601.58" width="3.4" height="6.5" rx=".7" fill="#f8efa6" stroke="#bda535" stroke-width=".7"/><path d="M28.50 602.08h3" stroke="#bda535" stroke-width=".9"/><path d="M28.30 603.48h3.4" stroke="#bda535" stroke-width=".45"/><rect x="28.30" y="611.17" width="3.4" height="6.5" rx=".7" fill="#f8efa6" stroke="#bda535" stroke-width=".7"/><path d="M28.50 611.67h3" stroke="#bda535" stroke-width=".9"/><path d="M28.30 613.07h3.4" stroke="#bda535" stroke-width=".45"/><rect x="28.30" y="620.77" width="3.4" height="6.5" rx=".7" fill="#f8efa6" stroke="#bda535" stroke-width=".7"/><path d="M28.50 621.27h3" stroke="#bda535" stroke-width=".9"/><path d="M28.30 622.67h3.4" stroke="#bda535" stroke-width=".45"/><rect x="28.30" y="630.37" width="3.4" height="6.5" rx=".7" fill="#f8efa6" stroke="#bda535" stroke-width=".7"/><path d="M28.50 630.87h3" stroke="#bda535" stroke-width=".9"/><path d="M28.30 632.27h3.4" stroke="#bda535" stroke-width=".45"/><rect x="28.30" y="639.97" width="3.4" height="6.5" rx=".7" fill="#f8efa6" stroke="#bda535" stroke-width=".7"/><path d="M28.50 640.47h3" stroke="#bda535" stroke-width=".9"/><path d="M28.30 641.87h3.4" stroke="#bda535" stroke-width=".45"/><rect x="28.30" y="649.57" width="3.4" height="6.5" rx=".7" fill="#f8efa6" stroke="#bda535" stroke-width=".7"/><path d="M28.50 650.07h3" stroke="#bda535" stroke-width=".9"/><path d="M28.30 651.47h3.4" stroke="#bda535" stroke-width=".45"/><rect x="28.30" y="659.16" width="3.4" height="6.5" rx=".7" fill="#f8efa6" stroke="#bda535" stroke-width=".7"/><path d="M28.50 659.66h3" stroke="#bda535" stroke-width=".9"/><path d="M28.30 661.06h3.4" stroke="#bda535" stroke-width=".45"/><rect x="28.30" y="668.76" width="3.4" height="6.5" rx=".7" fill="#f8efa6" stroke="#bda535" stroke-width=".7"/><path d="M28.50 669.26h3" stroke="#bda535" stroke-width=".9"/><path d="M28.30 670.66h3.4" stroke="#bda535" stroke-width=".45"/><rect x="28.30" y="678.36" width="3.4" height="6.5" rx=".7" fill="#f8efa6" stroke="#bda535" stroke-width=".7"/><path d="M28.50 678.86h3" stroke="#bda535" stroke-width=".9"/><path d="M28.30 680.26h3.4" stroke="#bda535" stroke-width=".45"/><rect x="28.30" y="687.96" width="3.4" height="6.5" rx=".7" fill="#f8efa6" stroke="#bda535" stroke-width=".7"/><path d="M28.50 688.46h3" stroke="#bda535" stroke-width=".9"/><path d="M28.30 689.86h3.4" stroke="#bda535" stroke-width=".45"/><rect x="28.30" y="697.56" width="3.4" height="6.5" rx=".7" fill="#f8efa6" stroke="#bda535" stroke-width=".7"/><path d="M28.50 698.06h3" stroke="#bda535" stroke-width=".9"/><path d="M28.30 699.46h3.4" stroke="#bda535" stroke-width=".45"/><rect x="28.30" y="707.15" width="3.4" height="6.5" rx=".7" fill="#f8efa6" stroke="#bda535" stroke-width=".7"/><path d="M28.50 707.65h3" stroke="#bda535" stroke-width=".9"/><path d="M28.30 709.05h3.4" stroke="#bda535" stroke-width=".45"/></svg>
<div class="abs" style="left:291.20000000000005px;top:24.7px;width:369.70000000000005px;height:710px;background:#fff"></div>
<div class="abs" style="left:291.20000000000005px;top:24.7px;width:369.70000000000005px;height:39.3px;background:#ebebeb;border-bottom:.6px solid #d6d6d6"></div>
<div class="abs" style="left:448.20000000000005px;top:34.1px;width:57.3px;height:7.6px;background:#e1e1e1;border-radius:2px"></div>
<div class="abs" style="left:448.5999999999999px;top:34.5px;width:15.2px;height:6.8px;background:#fff;border-radius:1.6px;box-shadow:0 0 .6px #999"></div>
<span class="t" style="left:451.5px;top:36.6px;font-size:4.9px;color:#222;-webkit-text-stroke:.1px #222">Text</span>
<span class="t" style="left:465.5999999999999px;top:36.6px;font-size:4.9px;color:#222;-webkit-text-stroke:.1px #222">Preview</span>
<span class="t" style="left:488.29999999999995px;top:36.6px;font-size:4.9px;color:#222;-webkit-text-stroke:.1px #222">Export</span>
<div class="abs" style="left:294.4px;top:49.5px;width:7px;height:7px;border-radius:50%;background:radial-gradient(circle at 35% 30%,#9fd0cc,#3f8f8a 60%,#2a5f5c)"></div>
<span class="t" style="left:322.6px;top:49.4px;font-size:11.6px;color:#ac8c2c;-webkit-text-stroke:.15px #ac8c2c">Give it time</span>
<div class="btn" style="left:646.8px;top:47.6px;width:10.8px;height:6.8px;border-radius:2.2px"></div>
<svg class="abs" style="left:646.8px;top:47.6px" width="11" height="16" viewBox="0 0 11 16"><path d="M3.4 1.8v3.2M5.4 1.8v3.2M7.4 1.8v3.2" stroke="#555" stroke-width=".6"/><path d="M4.2 12.4l1.1 1 1.1-1" stroke="#bbb" stroke-width=".5" fill="none"/></svg>
<span class="t" style="left:295px;top:67.9px;font-size:5.2px;font-weight:bold;color:#111">Tags</span>
<span class="t" style="left:388px;top:67.9px;font-size:5.2px;font-weight:bold;color:#111">principle</span>
<div class="abs" style="left:291.20000000000005px;top:73.7px;width:369.70000000000005px;height:4.8px;background:#e6e6e6"></div>
<div class="abs" style="left:291.20000000000005px;top:78.5px;width:369.70000000000005px;height:12.5px;background:#f6f6f6"></div>
<div class="btn" style="left:293.20000000000005px;top:81.6px;width:24.299999999999955px;height:6.8px"></div>
<span class="t" style="left:295.40000000000003px;top:83.7px;font-size:4.8px;color:#222;-webkit-text-stroke:.12px #222">Styles</span>
<i class="pp" style="left:311.9px;top:82.6px"></i><i class="abs" style="left:313.29999999999995px;top:84.5px;border-top:1.4px solid #fff;border-left:1px solid transparent;border-right:1px solid transparent"></i>
<div class="btn" style="left:320.70000000000005px;top:81.6px;width:45.59999999999991px;height:6.8px"></div>
<div class="btn" style="left:369.20000000000005px;top:81.6px;width:28.299999999999955px;height:6.8px"></div>
<span class="t" style="left:371.40000000000003px;top:83.7px;font-size:4.8px;color:#222;-webkit-text-stroke:.12px #222">Spacing</span>
<i class="pp" style="left:392.29999999999995px;top:82.6px"></i><i class="abs" style="left:393.69999999999993px;top:84.5px;border-top:1.4px solid #fff;border-left:1px solid transparent;border-right:1px solid transparent"></i>
<div class="btn" style="left:401.29999999999995px;top:81.6px;width:19.600000000000136px;height:6.8px"></div>
<span class="t" style="left:403.49999999999994px;top:83.7px;font-size:4.8px;color:#222;-webkit-text-stroke:.12px #222">Lists</span>
<i class="pp" style="left:415.5px;top:82.6px"></i><i class="abs" style="left:416.9px;top:84.5px;border-top:1.4px solid #fff;border-left:1px solid transparent;border-right:1px solid transparent"></i>
<div class="abs" style="left:321.20000000000005px;top:82.0px;width:10.5px;height:6px;background:#fff;border-radius:1.5px;box-shadow:0 0 .5px #888"></div>
<svg class="abs" style="left:320.70000000000005px;top:81.6px" width="46" height="7" viewBox="982.7 92.1 46 7">
<rect x="984.30" y="93.15" width="6" height="1.1" fill="#4a4a4a"/>
<rect x="984.30" y="94.85000000000001" width="3.8" height="1.1" fill="#4a4a4a"/>
<rect x="984.30" y="96.55" width="6" height="1.1" fill="#4a4a4a"/>
<rect x="996.00" y="93.15" width="6" height="1.1" fill="#4a4a4a"/>
<rect x="997.10" y="94.85000000000001" width="3.8" height="1.1" fill="#4a4a4a"/>
<rect x="996.00" y="96.55" width="6" height="1.1" fill="#4a4a4a"/>
<rect x="1007.80" y="93.15" width="6" height="1.1" fill="#4a4a4a"/>
<rect x="1007.80" y="94.85000000000001" width="6" height="1.1" fill="#4a4a4a"/>
<rect x="1007.80" y="96.55" width="6" height="1.1" fill="#4a4a4a"/>
<rect x="1019.90" y="93.15" width="6" height="1.1" fill="#4a4a4a"/>
<rect x="1022.10" y="94.85000000000001" width="3.8" height="1.1" fill="#4a4a4a"/>
<rect x="1019.90" y="96.55" width="6" height="1.1" fill="#4a4a4a"/>
</svg>
<svg class="abs" style="left:628px;top:81.5px" width="32" height="7" viewBox="1290 92 32 7"><path d="M1293.2 93.1l2.6 2-2.6 2z" fill="#444"/><path d="M1301.9 92.9l2.2 2.2-2.2 2.2-2.2-2.2z" fill="#555"/><path d="M1310.8 93.1l-2.6 2 2.6 2z" fill="#444"/><circle cx="1317" cy="95.1" r="1.9" fill="none" stroke="#444" stroke-width="1"/></svg>
<div class="abs" style="left:291.20000000000005px;top:91.0px;width:369.70000000000005px;height:11.3px;background:#fcfcfc"></div>
<svg class="abs" style="will-change:transform;left:291.20000000000005px;top:91.0px" width="369.70000000000005" height="11.3" viewBox="953.2 101.5 369.70000000000005 11.3">
<path d="M953.2 105.9H1323" stroke="#999" stroke-width=".5" stroke-dasharray=".6 1.380"/>
<path d="M967.3 105.9v5" stroke="#bbb" stroke-width=".5"/><text x="968.1" y="111.9" font-size="4.4" fill="#333" font-family='"Liberation Sans", sans-serif'>0</text>
<path d="M999.2 105.9v5" stroke="#bbb" stroke-width=".5"/><text x="1000.0" y="111.9" font-size="4.4" fill="#333" font-family='"Liberation Sans", sans-serif'>1</text>
<path d="M1031.0 105.9v5" stroke="#bbb" stroke-width=".5"/><text x="1031.8" y="111.9" font-size="4.4" fill="#333" font-family='"Liberation Sans", sans-serif'>2</text>
<path d="M1062.9 105.9v5" stroke="#bbb" stroke-width=".5"/><text x="1063.7" y="111.9" font-size="4.4" fill="#333" font-family='"Liberation Sans", sans-serif'>3</text>
<path d="M1094.8 105.9v5" stroke="#bbb" stroke-width=".5"/><text x="1095.6" y="111.9" font-size="4.4" fill="#333" font-family='"Liberation Sans", sans-serif'>4</text>
<path d="M1126.6 105.9v5" stroke="#bbb" stroke-width=".5"/><text x="1127.4" y="111.9" font-size="4.4" fill="#333" font-family='"Liberation Sans", sans-serif'>5</text>
<path d="M1158.5 105.9v5" stroke="#bbb" stroke-width=".5"/><text x="1159.3" y="111.9" font-size="4.4" fill="#333" font-family='"Liberation Sans", sans-serif'>6</text>
<path d="M1190.4 105.9v5" stroke="#bbb" stroke-width=".5"/><text x="1191.2" y="111.9" font-size="4.4" fill="#333" font-family='"Liberation Sans", sans-serif'>7</text>
<path d="M1222.3 105.9v5" stroke="#bbb" stroke-width=".5"/><text x="1223.1" y="111.9" font-size="4.4" fill="#333" font-family='"Liberation Sans", sans-serif'>8</text>
<path d="M1254.1 105.9v5" stroke="#bbb" stroke-width=".5"/><text x="1254.9" y="111.9" font-size="4.4" fill="#333" font-family='"Liberation Sans", sans-serif'>9</text>
<path d="M1286.0 105.9v5" stroke="#bbb" stroke-width=".5"/><text x="1286.8" y="111.9" font-size="4.4" fill="#333" font-family='"Liberation Sans", sans-serif'>10</text>
<path d="M1317.9 105.9v5" stroke="#bbb" stroke-width=".5"/><text x="1318.7" y="111.9" font-size="4.4" fill="#333" font-family='"Liberation Sans", sans-serif'>11</text>
<path d="M978.2 103l2 1.1-2 1.1z" fill="#333"/>
<path d="M990.0 103l2 1.1-2 1.1z" fill="#333"/>
<path d="M1001.9 103l2 1.1-2 1.1z" fill="#333"/>
<path d="M1013.8 103l2 1.1-2 1.1z" fill="#333"/>
<path d="M1025.6 103l2 1.1-2 1.1z" fill="#333"/>
<path d="M1037.5 103l2 1.1-2 1.1z" fill="#333"/>
<path d="M1049.4 103l2 1.1-2 1.1z" fill="#333"/>
<path d="M1061.3 103l2 1.1-2 1.1z" fill="#333"/>
<path d="M965.8 102.6h3.2M966.2 103.7h2.4M967.4 103.7v2" stroke="#333" stroke-width=".5" fill="none"/><path d="M1299.8 103.8h2.6l-1.3 1.3z" fill="#333"/>
</svg>
<div class="abs" style="left:291.20000000000005px;top:102.1px;width:369.70000000000005px;height:.5px;background:#e4e4e4"></div>
<span class="t" style="left:304px;top:115.2px;font-size:7.4px;color:#111;-webkit-text-stroke:.18px #111">Principle:</span>
<span class="t" style="left:304px;top:129.2px;font-size:7.380px;color:#111;-webkit-text-stroke:.22px #111">The time it takes is what it takes. Don't force it. (Or yourself.)</span>
</div>
<div class="abs" style="left:1323.5px;top:10.5px;width:1.5px;height:735px;background:#111"></div>
</body></html>
